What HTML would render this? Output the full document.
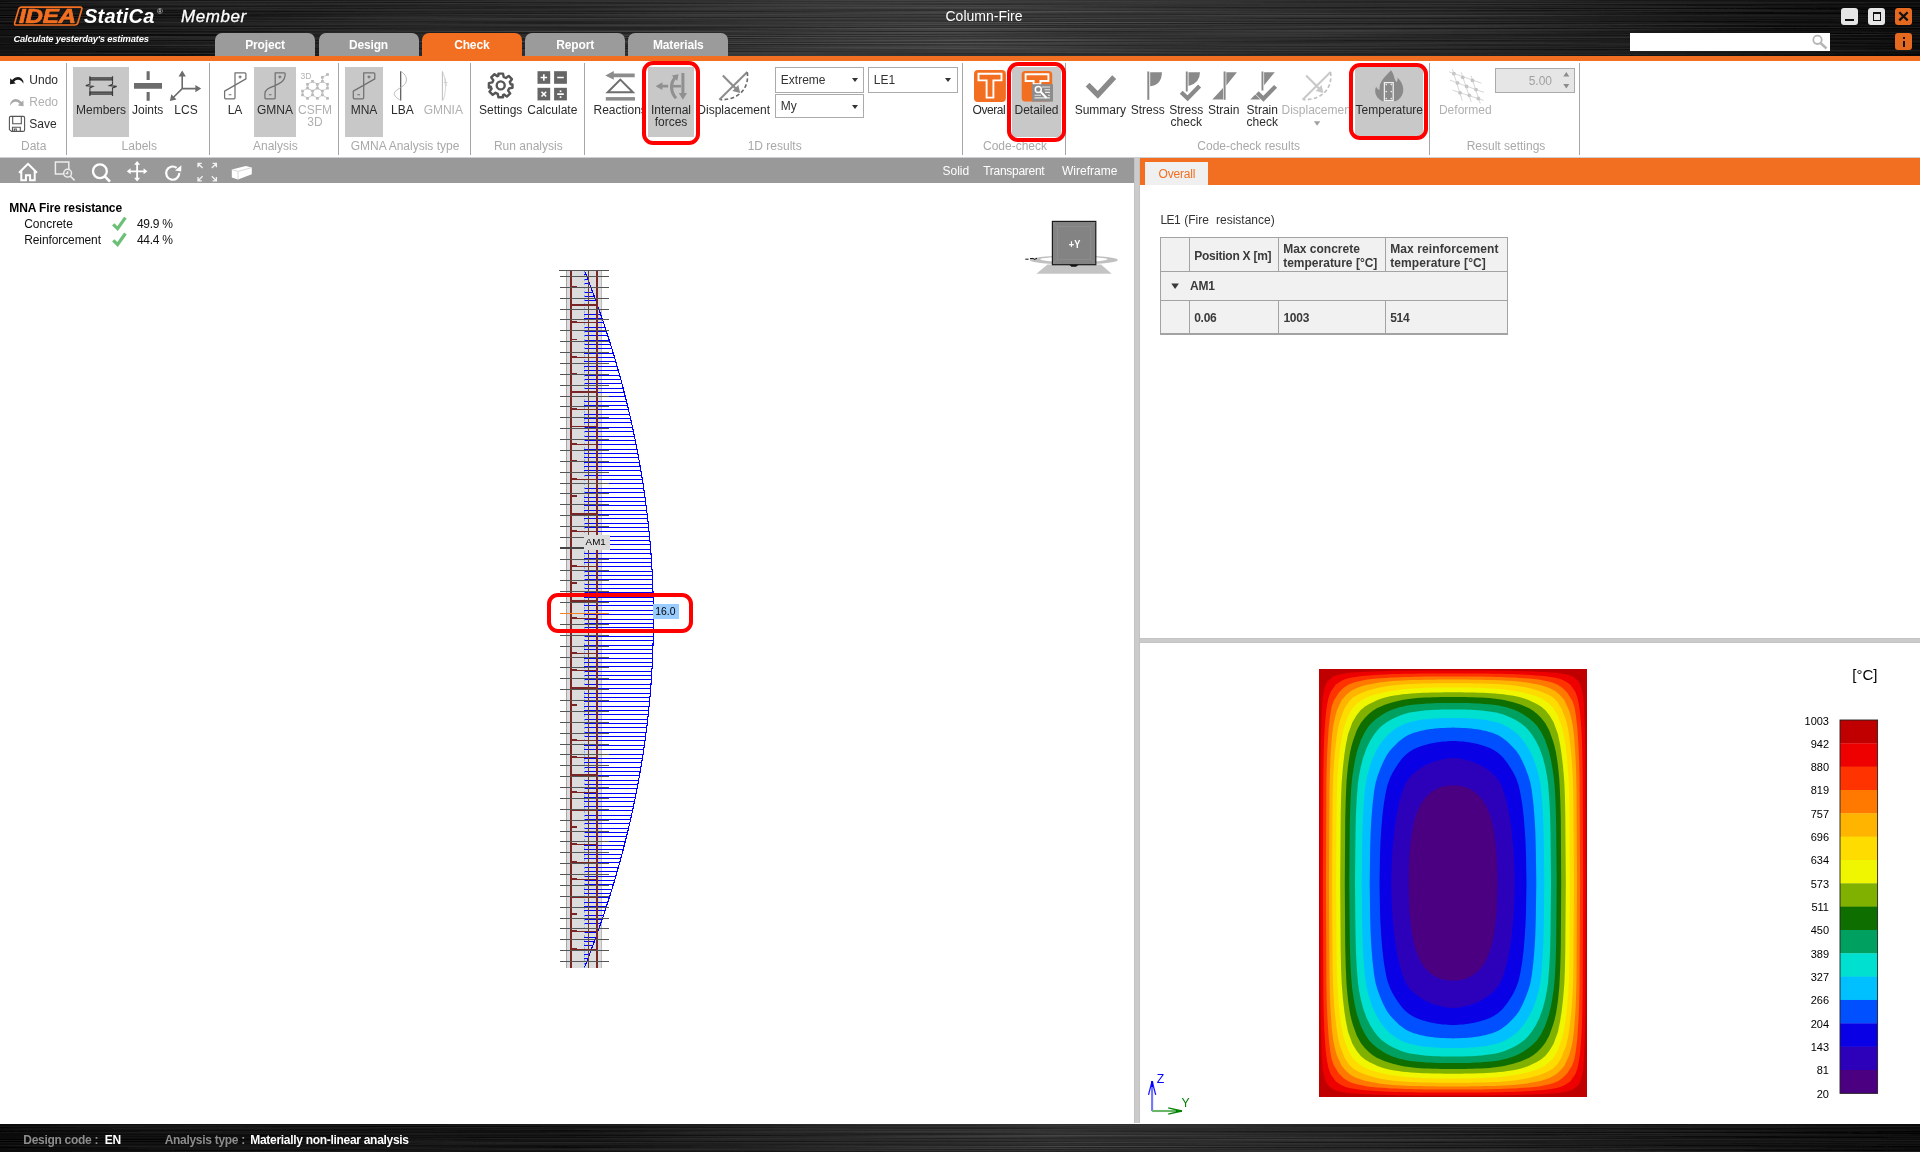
<!DOCTYPE html>
<html lang="en">
<head>
<meta charset="utf-8">
<title>Column-Fire</title>
<style>
*{box-sizing:border-box;margin:0;padding:0}
html,body{width:1920px;height:1152px;overflow:hidden;background:#fff}
body{font-family:"Liberation Sans",sans-serif;font-size:12px;color:#2b2b2b;position:relative}
.abs{position:absolute}
.t{position:absolute;white-space:pre;line-height:14px}
.c{text-align:center}
.brushed{position:absolute;left:0;width:1920px;background:#000;overflow:hidden}
.tab{position:absolute;top:33px;height:23px;width:100px;background:#9b9b9b;border-radius:7px 7px 0 0;color:#fff;font-weight:bold;font-size:12px;text-align:center;line-height:24px;letter-spacing:-0.15px}
.tab.on{background:#f26f21}
.sep{position:absolute;top:63px;width:1px;height:92px;background:#a6a6a6}
.glabel{position:absolute;top:139px;color:#a9a9a9;font-size:12px;text-align:center;white-space:pre;line-height:14px}
.hl{position:absolute;background:#c8c8c8;top:67px;height:70px}
.bl{position:absolute;top:104px;text-align:center;white-space:pre;line-height:12.4px;font-size:12px;color:#2b2b2b}
.dis{color:#b0b0b0}
.redbox{position:absolute;border:4px solid #fe0000;border-radius:11px}
.dd{position:absolute;height:25.4px;border:1px solid #ababab;background:#fff;font-size:12px;line-height:25px;padding-left:4.5px;color:#333}
.dd:after{content:"";position:absolute;right:5.6px;top:10px;border-left:3px solid transparent;border-right:3px solid transparent;border-top:4px solid #333}
svg{position:absolute;overflow:visible}
.th{font-weight:bold;color:#3a3a3a;letter-spacing:-0.25px}
.sb{font-weight:bold;letter-spacing:-0.3px}
</style>
</head>
<body>
<div id="app" style="position:absolute;left:0;top:0;width:1920px;height:1152px;will-change:transform">
<!-- ===== title bar ===== -->
<div class="brushed" style="top:0;height:56px">
<svg width="1920" height="56" style="left:0;top:0">
<defs>
<filter id="brush" x="0" y="0" width="100%" height="100%">
<feTurbulence type="fractalNoise" baseFrequency="0.0025 0.85" numOctaves="2" seed="7" result="n"/>
<feColorMatrix in="n" type="matrix" values="0 0 0 0 0  0 0 0 0 0  0 0 0 0 0  1.9 0 0 0 -0.55"/>
<feComposite operator="in" in="SourceGraphic"/>
</filter>
<linearGradient id="hg" x1="0" x2="1" y1="0" y2="0">
<stop offset="0" stop-color="#050505"/><stop offset="0.2" stop-color="#171717"/><stop offset="0.5" stop-color="#2b2b2b"/><stop offset="0.75" stop-color="#1a1a1a"/><stop offset="0.93" stop-color="#070707"/><stop offset="1" stop-color="#030303"/>
</linearGradient>
<linearGradient id="hs" x1="0" x2="1" y1="0" y2="0">
<stop offset="0" stop-color="#282828"/><stop offset="0.5" stop-color="#565656"/><stop offset="0.92" stop-color="#2a2a2a"/><stop offset="1" stop-color="#202020"/>
</linearGradient>
</defs>
<rect width="1920" height="56" fill="url(#hg)"/>
<rect width="1920" height="56" fill="url(#hs)" filter="url(#brush)"/>
</svg>
</div>
<!-- logo -->
<svg width="90" height="30" style="left:8px;top:2px"><path d="M13.5 5.2H72.2Q74.4 5.2 73.8 7.3L69.8 20.9Q69.2 23 67 23H8.3Q6.1 23 6.7 20.9L10.7 7.3Q11.3 5.2 13.5 5.2Z" fill="none" stroke="#f26f21" stroke-width="1.7"/></svg>
<div class="t" style="left:19.4px;top:5.8px;font-size:19.8px;line-height:20px;font-weight:bold;font-style:italic;color:#f26f21;letter-spacing:-0.2px;-webkit-text-stroke:0.7px #f26f21;transform:scaleX(1.22);transform-origin:0 0">IDEA</div>
<div class="t" style="left:84px;top:4.8px;font-size:20px;line-height:22px;font-weight:bold;font-style:italic;color:#fff;letter-spacing:0.25px">StatiCa</div>
<div class="t" style="left:157px;top:7.6px;font-size:8px;line-height:8px;color:#ddd">®</div>
<div class="t" style="left:181px;top:7px;font-size:17px;line-height:20px;font-style:italic;color:#fff;letter-spacing:0.55px;-webkit-text-stroke:0.3px #fff">Member</div>
<div class="t" style="left:13.5px;top:33px;font-size:9.4px;line-height:11px;font-style:italic;font-weight:bold;color:#fff;letter-spacing:-0.2px">Calculate yesterday's estimates</div>
<div class="t c" style="left:884px;top:8px;width:200px;font-size:14px;line-height:16px;color:#fff">Column-Fire</div>
<!-- tabs -->
<div class="tab" style="left:215px">Project</div>
<div class="tab" style="left:318.5px">Design</div>
<div class="tab on" style="left:421.8px">Check</div>
<div class="tab" style="left:525.2px">Report</div>
<div class="tab" style="left:628.3px">Materials</div>
<!-- window buttons -->
<div class="abs" style="left:1841px;top:8px;width:17px;height:16.5px;border-radius:3px;background:#e6e6e6"></div>
<div class="abs" style="left:1845px;top:19.2px;width:9px;height:1.7px;background:#111"></div>
<div class="abs" style="left:1868px;top:8px;width:17px;height:16.5px;border-radius:3px;background:#e6e6e6"></div>
<div class="abs" style="left:1872.5px;top:11.5px;width:8.5px;height:9px;border:1.5px solid #111;border-top-width:2.5px"></div>
<div class="abs" style="left:1895px;top:8px;width:17px;height:16.5px;border-radius:3px;background:#e5691f"></div>
<svg width="17" height="17" style="left:1895px;top:8px"><path d="M4.3 4.2L12.7 12.4M12.7 4.2L4.3 12.4" stroke="#111" stroke-width="2.2"/></svg>
<div class="abs" style="left:1630px;top:33px;width:200px;height:18px;background:#fff"></div>
<svg width="20" height="18" style="left:1810px;top:33px"><circle cx="7.5" cy="6.8" r="4.2" fill="none" stroke="#b5b5b5" stroke-width="1.8"/><path d="M10.5 10L16.5 15.5" stroke="#b5b5b5" stroke-width="2.4"/></svg>
<div class="abs" style="left:1895px;top:33px;width:17px;height:17px;border-radius:3px;background:#e5691f"></div>
<div class="abs" style="left:1902.5px;top:37px;width:2.2px;height:2px;background:#111"></div>
<div class="abs" style="left:1902.5px;top:40.6px;width:2.2px;height:6px;background:#111"></div>
<!-- orange stripe -->
<div class="abs" style="left:0;top:56px;width:1920px;height:5px;background:#f26f21"></div>
<!-- ===== ribbon ===== -->
<div class="abs" style="left:0;top:61px;width:1920px;height:96px;background:#fff"></div>
<div class="sep" style="left:66.3px"></div>
<div class="sep" style="left:209.3px"></div>
<div class="sep" style="left:338.0px"></div>
<div class="sep" style="left:470.1px"></div>
<div class="sep" style="left:584.3px"></div>
<div class="sep" style="left:962.3px"></div>
<div class="sep" style="left:1065.3px"></div>
<div class="sep" style="left:1429.3px"></div>
<div class="sep" style="left:1579.1px"></div>
<!-- highlights -->
<div class="hl" style="left:73px;width:56px"></div>
<div class="hl" style="left:254px;width:42px"></div>
<div class="hl" style="left:345.3px;width:37.6px"></div>
<div class="hl" style="left:648px;width:46px"></div>
<div class="hl" style="left:1012.3px;width:48.7px"></div>
<div class="hl" style="left:1355px;width:68.3px"></div>
<!-- data group -->
<div class="t" style="left:29.3px;top:73px">Undo</div>
<div class="t dis" style="left:29.3px;top:95px">Redo</div>
<div class="t" style="left:29.3px;top:117px">Save</div>
<div class="glabel" style="left:3.7px;width:60px">Data</div>
<!-- labels group -->
<div class="bl" style="left:61px;width:80px">Members</div>
<div class="bl" style="left:107.7px;width:80px">Joints</div>
<div class="bl" style="left:146px;width:80px">LCS</div>
<div class="glabel" style="left:99.3px;width:80px">Labels</div>
<!-- analysis -->
<div class="bl" style="left:195px;width:80px">LA</div>
<div class="bl" style="left:235px;width:80px">GMNA</div>
<div class="bl dis" style="left:275px;width:80px">CSFM
3D</div>
<div class="glabel" style="left:235.3px;width:80px">Analysis</div>
<div class="bl" style="left:324px;width:80px">MNA</div>
<div class="bl" style="left:362.3px;width:80px">LBA</div>
<div class="bl dis" style="left:403.3px;width:80px">GMNIA</div>
<div class="glabel" style="left:335px;width:140px">GMNA Analysis type</div>
<div class="bl" style="left:460.7px;width:80px">Settings</div>
<div class="bl" style="left:512.3px;width:80px">Calculate</div>
<div class="glabel" style="left:478.3px;width:100px">Run analysis</div>
<!-- 1D results -->
<div class="bl" style="left:593.5px;width:50px;overflow:hidden;text-align:left;height:14px">Reactions</div>
<div class="bl" style="left:631px;width:80px">Internal
forces</div>
<div class="bl" style="left:693.7px;width:80px">Displacement</div>
<div class="dd" style="left:775.3px;top:67.3px;width:89px">Extreme</div>
<div class="dd" style="left:775.3px;top:94px;width:89px;height:24.4px;line-height:23px">My</div>
<div class="dd" style="left:868.3px;top:67.3px;width:89.5px">LE1</div>
<div class="glabel" style="left:724.7px;width:100px">1D results</div>
<!-- code-check -->
<div class="bl" style="left:972.6px;width:32.9px;overflow:hidden;text-align:left;height:14px;letter-spacing:-0.45px">Overall</div>
<div class="bl" style="left:996.5px;width:80px">Detailed</div>
<div class="glabel" style="left:965px;width:100px">Code-check</div>
<div class="bl" style="left:1060.3px;width:80px">Summary</div>
<div class="bl" style="left:1107.7px;width:80px">Stress</div>
<div class="bl" style="left:1146.3px;width:80px">Stress
check</div>
<div class="bl" style="left:1183.7px;width:80px">Strain</div>
<div class="bl" style="left:1222.3px;width:80px">Strain
check</div>
<div class="bl dis" style="left:1281.5px;width:67px;overflow:hidden;text-align:left;height:14px">Displacement</div>
<div class="bl" style="left:1349.3px;width:80px">Temperature</div>
<div class="glabel" style="left:1188.7px;width:120px">Code-check results</div>
<div class="bl dis" style="left:1425.3px;width:80px">Deformed</div>
<div class="abs" style="left:1495px;top:67.5px;width:79.5px;height:25px;border:1px solid #ababab;background:#e6e6e6"></div>
<div class="t dis" style="left:1500px;top:73.8px;width:52px;text-align:right;color:#a0a0a0">5.00</div>
<div class="glabel" style="left:1446px;width:120px">Result settings</div>
<!-- red annotation boxes -->
<div class="redbox" style="left:642px;top:61.2px;width:58px;height:83.8px"></div>
<div class="redbox" style="left:1007px;top:62.2px;width:58.8px;height:79.5px"></div>
<div class="redbox" style="left:1349px;top:63px;width:79px;height:77px"></div>
<!-- ribbon icons -->
<svg width="1920" height="96" viewBox="0 61 1920 96" style="left:0;top:61px">
<!-- undo / redo / save -->
<path d="M10 84.2L10.2 78.2L12 79.9Q16.8 75.2 21.4 78.3Q23.8 80.4 23.4 83.8Q21.3 79.6 17.6 79.8Q15.6 80 14 81.7L15.8 83.4Z" fill="#1a1a1a"/>
<path d="M23.6 106.2L23.4 100.2L21.6 101.9Q16.8 97.2 12.2 100.3Q9.8 102.4 10.2 105.8Q12.3 101.6 16 101.8Q18 102 19.6 103.7L17.8 105.4Z" fill="#a9a9a9"/>
<path d="M10.8 116.4H23.2Q24.6 116.4 24.6 117.8V130Q24.6 131.4 23.2 131.4H11.5L9.4 129.6V117.8Q9.4 116.4 10.8 116.4Z" fill="none" stroke="#555" stroke-width="1.1"/>
<path d="M12.7 116.6V123.8H21.3V116.6M12.5 131.2V127.2H20.3V131.2M14.3 131V129H16.3V131" fill="none" stroke="#555" stroke-width="1.1"/>
<!-- members -->
<g stroke="#3a3a3a" fill="none">
<path d="M89.6 78.9H112.8M89.6 93.2H112.8" stroke-width="3.3"/><path d="M90.6 78.9H111.8M90.6 93.2H111.8" stroke-width="1" stroke="#777"/>
<path d="M89.9 76.2V81.6M112.5 76.2V81.6M89.9 90.5V95.9M112.5 90.5V95.9" stroke-width="1.2"/>
<path d="M89.9 81.6V84.2L85.8 85.6L93 86.4L89.9 87.9V90.5M112.5 81.6V84.2L109.4 85.6L116.6 86.4L112.5 87.9V90.5" stroke-width="1.1"/>
</g>
<!-- joints -->
<path d="M134 83.1H162V88.8H134ZM146.6 71.3H149.7V80H146.6ZM146.6 92.1H149.7V100.8H146.6Z" fill="#6c6c6c"/>
<!-- LCS -->
<g stroke="#6c6c6c" stroke-width="1.6" fill="none"><path d="M182.2 75V88.6H197M182.2 88.6L172.5 98.3"/></g>
<path d="M182.2 70.6L185.9 76.4H178.5ZM201.2 88.6L195.4 92.3V84.9ZM169.9 101L171.3 94.3L176.5 99.5Z" fill="#6c6c6c"/>
<!-- LA -->
<g fill="none" stroke="#707070" stroke-width="1.25" stroke-linejoin="round">
<path d="M235 72.8H244.9Q245.9 72.8 245.9 73.8V78.9L224.6 91.1V97.8Q224.6 98.8 225.6 98.8H234Q235 98.8 235 97.8Z"/>
<path d="M275.2 72.8H284.2Q285.2 72.8 285.2 73.8C285.2 88 266 84 264.9 93.5V97.8Q264.9 98.8 265.9 98.8H274.2Q275.2 98.8 275.2 97.8Z"/>
<path d="M363.7 72.8H373.8Q374.8 72.8 374.8 73.8V78.9L353.3 91.1V97.8Q353.3 98.8 354.3 98.8H362.7Q363.7 98.8 363.7 97.8Z"/>
</g>
<g stroke="#707070" stroke-width="1.1"><path d="M238.6 76.9H241.6M240.1 75.4V78.4M228.6 94.8H231.4M278.4 76.9H281.4M279.9 75.4V78.4M268.8 94.8H271.6M367.5 76.9H370.5M369 75.4V78.4M357.3 94.8H360.1"/></g>
<!-- CSFM 3D -->
<path d="M312.5 81.4L317.4 84.3L317.4 88.1L312.5 91.1L307.5 88.1L307.5 84.3ZM322.4 81.4L327.5 84.3L327.5 88.1L322.4 91.1L317.4 88.1L317.4 84.3ZM307.5 88.1L312.5 91.1L312.5 94.9L307.5 98.3L302.5 94.9L302.5 91.1ZM317.4 88.1L322.4 91.1L322.4 94.9L317.4 98.3L312.5 94.9L312.5 91.1ZM322.4 94.9L327.5 98.3M322.4 81.4L322.4 77.3L327.5 74.5" fill="none" stroke="#c6c6c6" stroke-width="0.9"/>
<g fill="#b9b9b9"><rect x="301.15" y="89.75" width="2.7" height="2.7"/><rect x="301.15" y="93.55" width="2.7" height="2.7"/><rect x="306.15" y="82.95" width="2.7" height="2.7"/><rect x="306.15" y="86.75" width="2.7" height="2.7"/><rect x="306.15" y="96.95" width="2.7" height="2.7"/><rect x="311.15" y="80.05" width="2.7" height="2.7"/><rect x="311.15" y="89.75" width="2.7" height="2.7"/><rect x="311.15" y="93.55" width="2.7" height="2.7"/><rect x="316.05" y="82.95" width="2.7" height="2.7"/><rect x="316.05" y="86.75" width="2.7" height="2.7"/><rect x="316.05" y="96.95" width="2.7" height="2.7"/><rect x="321.05" y="75.95" width="2.7" height="2.7"/><rect x="321.05" y="80.05" width="2.7" height="2.7"/><rect x="321.05" y="89.75" width="2.7" height="2.7"/><rect x="321.05" y="93.55" width="2.7" height="2.7"/><rect x="326.15" y="73.15" width="2.7" height="2.7"/><rect x="326.15" y="82.95" width="2.7" height="2.7"/><rect x="326.15" y="86.75" width="2.7" height="2.7"/><rect x="326.15" y="96.95" width="2.7" height="2.7"/></g>
<text x="300.6" y="79.2" font-family="Liberation Sans, sans-serif" font-size="8.6" fill="#b4b4b4">3D</text>
<!-- LBA / GMNIA -->
<path d="M400.7 71.2V100.6" stroke="#555" stroke-width="1.2" fill="none"/>
<path d="M400.7 71.5C406 74 408.5 80 404.5 84.5C401 88.5 394.5 90 394.3 93.5C394.2 97 398.5 99 400.7 100.4" stroke="#aaa" stroke-width="0.8" fill="none"/>
<path d="M442.4 71.3V100.5" stroke="#b4b4b4" stroke-width="0.9" fill="none"/>
<path d="M442.6 72C446.5 80 446 92 443.4 100M445 78L446.5 86M443.8 82.5H447.5" stroke="#c4c4c4" stroke-width="0.7" fill="none"/>
<!-- settings gear -->
<g transform="translate(500.7 85.4)" fill="none" stroke="#555" stroke-width="2.4" stroke-linejoin="round">
<path d="M-2.3 -11.8H2.3L3 -8.4L5.2 -7.4L8 -9.5L11.2 -6.2L9.1 -3.4L10 -1.2L11.8 -1L11.8 2.3L8.4 3L7.4 5.2L9.5 8L6.2 11.2L3.4 9.1L2.3 9.7V11.8H-2.3L-3 8.4L-5.2 7.4L-8 9.5L-11.2 6.2L-9.1 3.4L-10 1.2L-11.8 2.3V-2.3L-8.4 -3L-7.4 -5.2L-9.5 -8L-6.2 -11.2L-3.4 -9.1L-2.3 -9.7Z"/>
<circle r="4"/>
</g>
<!-- calculate -->
<g fill="#666"><rect x="537.5" y="71.2" width="12.7" height="12.6"/><rect x="554.1" y="71.2" width="12.8" height="12.6"/><rect x="537.5" y="87.8" width="12.7" height="12.6"/><rect x="554.1" y="87.8" width="12.8" height="12.6"/></g>
<g stroke="#fff" stroke-width="1.6" fill="none"><path d="M540.6 77.5H547.1M543.85 74.2V80.8M557.2 77.5H563.8M541.5 91.8L546.2 96.5M546.2 91.8L541.5 96.5M557.2 94.1H563.8"/></g>
<g fill="#fff"><rect x="559.7" y="90.4" width="1.7" height="1.7"/><rect x="559.7" y="96.2" width="1.7" height="1.7"/></g>
<!-- reactions -->
<g fill="#8c8c8c"><path d="M605.3 75.4L613.8 71.1V73.5H634.7V77.3H613.8V79.7Z"/><rect x="605.8" y="97.1" width="29.2" height="3.5"/></g>
<path d="M620.3 79.6L632.9 92.2H607.7Z" fill="none" stroke="#6e6e6e" stroke-width="2"/>
<!-- internal forces -->
<g fill="#909090"><path d="M655.6 86.2L662.4 82.3V84.8H668.2V87.6H662.4V90.1Z"/><path d="M682.9 99.7L678.8 93H681.4V73.1H684.4V93H687Z"/><rect x="672" y="84.9" width="9" height="2.6"/>
<path d="M678.6 74.2L677.2 81L675.6 79.3C671.8 84 672.6 92.6 677.2 97.3L675 99.3C669 93.4 668.2 83.2 673.4 77.3L671.8 75.5Z"/></g>
<!-- displacement (x2) -->
<g transform="translate(0 0)"><path d="M719.3 99.8L747.3 72" fill="none" stroke="#8c8c8c" stroke-width="2"/><path d="M722.8 75.5L736.5 89.2" fill="none" stroke="#8c8c8c" stroke-width="2.1"/><path d="M740.2 92.9L732.3 91L738.3 85Z" fill="#8c8c8c"/><path d="M747.3 72.3C749.2 86 741.5 99.6 720.5 99.8" fill="none" stroke="#6a6a6a" stroke-width="1.6" stroke-dasharray="3.8 2.3"/></g><g transform="translate(583.3 0)"><path d="M719.3 99.8L747.3 72" fill="none" stroke="#c8c8c8" stroke-width="2"/><path d="M722.8 75.5L736.5 89.2" fill="none" stroke="#c8c8c8" stroke-width="2.1"/><path d="M740.2 92.9L732.3 91L738.3 85Z" fill="#c8c8c8"/><path d="M747.3 72.3C749.2 86 741.5 99.6 720.5 99.8" fill="none" stroke="#c0c0c0" stroke-width="1.6" stroke-dasharray="3.8 2.3"/></g>
<!-- overall -->
<rect x="974" y="70" width="31.9" height="31.9" rx="4" fill="#f26f21"/>
<path d="M978.5 73.7H1001.5V80.4H993.4V97.6H986.6V80.4H978.5Z" fill="none" stroke="#fff" stroke-width="1.9"/>
<!-- detailed -->
<rect x="1021.7" y="71" width="30.5" height="30.5" rx="3.5" fill="#f26f21"/>
<path d="M1025.6 74.2H1048.4V81H1040.4V84.2H1033.6V81H1025.6Z" fill="none" stroke="#fff" stroke-width="1.9"/>
<rect x="1031.9" y="84.2" width="21.1" height="17.4" fill="#8c8c8c"/>
<path d="M1042 87H1050M1044.5 89.7H1050M1045 92.4H1050M1034.5 95.2H1041M1048 95.2H1050M1034.5 97.9H1050" stroke="#e8e8e8" stroke-width="1.1"/>
<circle cx="1038.3" cy="89.5" r="3" fill="none" stroke="#fff" stroke-width="1.5"/>
<path d="M1040.6 91.8L1046.6 98" stroke="#fff" stroke-width="2"/>
<!-- summary -->
<path d="M1087.6 84.6L1097.8 94.8L1114.2 77.2" fill="none" stroke="#8a8a8a" stroke-width="5.4"/>
<!-- stress -->
<g fill="#8a8a8a">
<rect x="1147.3" y="71.5" width="2" height="28.3"/><path d="M1150.2 72.3H1162Q1161.5 85.5 1150.2 86.2Z"/>
<rect x="1185.8" y="71.5" width="1.9" height="20"/><path d="M1188.5 72.3H1200Q1199.8 83.5 1188.5 86Z"/>
<rect x="1223.6" y="71.5" width="2" height="28.3"/><path d="M1226.3 72.2H1236.9L1226.3 85.4Z"/><path d="M1223 88V99.5H1212.3Z"/>
<rect x="1261.5" y="71.5" width="1.9" height="19"/><path d="M1264.1 72.2H1274.8L1264.1 85.2Z"/><path d="M1255.3 94.5L1260.3 99.5H1250.2Z"/>
</g>
<path d="M1181.2 92.3L1187.6 98.3L1199.6 86" fill="none" stroke="#8a8a8a" stroke-width="4.2"/>
<path d="M1257.2 92.8L1263.4 98.8L1275.6 86.4" fill="none" stroke="#8a8a8a" stroke-width="4.2"/>
<path d="M1313.9 121.3H1320.3L1317.1 125.8Z" fill="#a0a0a0"/>
<!-- temperature flame -->
<path d="M1391 70.2C1394.5 74.5 1394 79 1396.5 82.2C1397.8 80.5 1397.8 78.8 1397.5 77.6C1402 82 1404.2 87.5 1403 92.5C1402 97 1399 99.8 1395.5 101.2H1382.5C1378.5 99.5 1375.6 96 1375.2 91.5C1375 89.5 1375.6 87.8 1376.2 86.8C1377 88.6 1378.2 89.6 1379.6 89.8C1378.6 81.5 1385.5 76.5 1391 70.2Z" fill="#8a8a8a"/>
<rect x="1384.4" y="82.6" width="8.8" height="18" fill="#8a8a8a" stroke="#eee" stroke-width="1.3"/>
<g fill="#f0f0f0"><circle cx="1386.3" cy="84.6" r="0.8"/><circle cx="1391.3" cy="84.6" r="0.8"/><circle cx="1386.3" cy="91.6" r="0.8"/><circle cx="1391.3" cy="91.6" r="0.8"/><circle cx="1386.3" cy="98.6" r="0.8"/><circle cx="1391.3" cy="98.6" r="0.8"/></g>
<!-- deformed -->
<g stroke="#d2d2d2" stroke-width="0.9" fill="none"><path d="M1449 71.8L1481.5 83.2M1450 80.2L1484 92.4M1452.5 90.2L1483.5 100.4M1452.3 69.2L1462.3 100.5M1461.2 72.3L1471.2 101.8M1471 75.8L1480.3 103.5"/></g>
<g fill="#c6c6c6"><circle cx="1453.9" cy="73.7" r="1.9"/><circle cx="1462.7" cy="77.3" r="1.9"/><circle cx="1472.5" cy="80.4" r="1.9"/><circle cx="1457.4" cy="82.9" r="1.9"/><circle cx="1466.6" cy="86.5" r="1.9"/><circle cx="1476" cy="89.6" r="1.9"/><circle cx="1460" cy="92.8" r="1.9"/><circle cx="1469.3" cy="95.3" r="1.9"/><circle cx="1478.3" cy="98.5" r="1.9"/></g>
<!-- spinner arrows -->
<path d="M1563.3 76.6L1566.3 72L1569.3 76.6ZM1563.3 84L1566.3 88.6L1569.3 84Z" fill="#8c8c8c"/>

</svg>
<!-- ===== left viewport ===== -->
<div class="abs" style="left:0;top:157px;width:1920px;height:1px;background:#cdcfd2"></div>
<div class="abs" style="left:0;top:158px;width:1134px;height:25px;background:#999"></div>
<svg width="260" height="26" viewBox="0 157 260 26" style="left:0;top:157px">
<g fill="none" stroke="#fff" stroke-width="2">
<path d="M19 172.8L28 163.8L37 172.8M21.3 171V180.2H25.9V175.2H30.1V180.2H34.7V171"/>
<circle cx="99.9" cy="171.2" r="6.9" stroke-width="2.3"/><path d="M104.8 176.3L110 181.6" stroke-width="2.6"/>
<path d="M137.1 163V179.6M128.8 171.3H145.4" stroke-width="1.8"/>
<path d="M179.3 172.9A6.6 6.6 0 1 1 176.6 167.8" stroke-width="2.2"/>
</g>
<g fill="none" stroke="#ececec" stroke-width="1.5"><rect x="55.4" y="162" width="13.4" height="12"/><circle cx="67.6" cy="173.2" r="3.9" fill="#999"/><path d="M67.6 171.2V173.4H65.6M70.4 176.2L74.6 180.4" /></g>
<g fill="#fff"><path d="M137.1 161L140.1 164.8H134.1ZM137.1 181.6L140.1 177.8H134.1ZM126.8 171.3L130.6 168.3V174.3ZM147.4 171.3L143.6 168.3V174.3Z"/><path d="M181.4 165.2L181.2 171.6L175 170.4Z"/></g>
<g fill="none" stroke="#f2f2f2" stroke-width="1.3"><path d="M198 167.2V163.4H201.8M198.3 163.7L202.6 168M216.4 167.2V163.4H212.6M216.1 163.7L211.8 168M198 177V180.8H201.8M198.3 180.5L202.6 176.2M216.4 177V180.8H212.6M216.1 180.5L211.8 176.2"/></g>
<path d="M231.8 169.6L245.8 166L251.8 167.6V174.2L238 179.6L231.8 177.4Z" fill="#fff"/><path d="M231.8 169.6L238 171.4V179.6M238 171.4L251.8 167.6" fill="none" stroke="#ccc" stroke-width="0.8"/>
</svg>
<div class="t" style="left:942.5px;top:164px;color:#fff">Solid</div>
<div class="t" style="left:983.2px;top:164px;color:#fff;letter-spacing:-0.28px">Transparent</div>
<div class="t" style="left:1062px;top:164px;color:#fff">Wireframe</div>
<div class="t" style="left:9.3px;top:200.8px;font-weight:bold;color:#000;letter-spacing:-0.12px">MNA Fire resistance</div>
<div class="t" style="left:24.2px;top:216.6px;color:#111">Concrete</div>
<div class="t" style="left:24.2px;top:232.6px;color:#111;letter-spacing:-0.1px">Reinforcement</div>
<div class="t" style="left:137px;top:216.6px;color:#111;letter-spacing:-0.3px">49.9 %</div>
<div class="t" style="left:137px;top:232.6px;color:#111;letter-spacing:-0.3px">44.4 %</div>
<svg width="20" height="34" viewBox="110 215 20 34" style="left:110px;top:215px"><path d="M113.2 224.4L117.6 228.6L125.4 217.6M113.2 240.3L117.6 244.5L125.4 233.5" fill="none" stroke="#6cbf76" stroke-width="3.2"/></svg>
<!-- column -->
<svg width="200" height="740" viewBox="540 250 200 740" style="left:540px;top:250px" shape-rendering="crispEdges">
<rect x="566" y="270.5" width="36" height="697.0" fill="#dcdcdc"/><path d="M566.5 270.5V967.5" stroke="#a6a6a6" stroke-width="1"/><path d="M601.5 270.5V967.5" stroke="#bdbdbd" stroke-width="1"/>
<path d="M584.4 274.86H586.11M584.4 279.21H587.81M584.4 283.57H589.48M584.4 287.93H591.13M584.4 292.28H592.76M584.4 296.64H594.36M584.4 300.99H595.95M584.4 305.35H597.51M584.4 309.71H599.05M584.4 314.06H600.57M584.4 318.42H602.07M584.4 322.77H603.55M584.4 327.13H605.00M584.4 331.49H606.44M584.4 335.84H607.85M584.4 340.20H609.24M584.4 344.56H610.61M584.4 348.91H611.96M584.4 353.27H613.28M584.4 357.62H614.59M584.4 361.98H615.87M584.4 366.34H617.13M584.4 370.69H618.37M584.4 375.05H619.59M584.4 379.41H620.79M584.4 383.76H621.96M584.4 388.12H623.12M584.4 392.48H624.25M584.4 396.83H625.36M584.4 401.19H626.45M584.4 405.54H627.51M584.4 409.90H628.56M584.4 414.26H629.58M584.4 418.61H630.59M584.4 422.97H631.57M584.4 427.32H632.53M584.4 431.68H633.47M584.4 436.04H634.38M584.4 440.39H635.28M584.4 444.75H636.15M584.4 449.11H637.00M584.4 453.46H637.83M584.4 457.82H638.64M584.4 462.18H639.43M584.4 466.53H640.19M584.4 470.89H640.94M584.4 475.24H641.66M584.4 479.60H642.36M584.4 483.96H643.04M584.4 488.31H643.70M584.4 492.67H644.33M584.4 497.02H644.95M584.4 501.38H645.54M584.4 505.74H646.11M584.4 510.09H646.66M584.4 514.45H647.19M584.4 518.81H647.70M584.4 523.16H648.18M584.4 527.52H648.65M584.4 531.88H649.09M584.4 536.23H649.51M584.4 540.59H649.91M584.4 544.94H650.28M584.4 549.30H650.64M584.4 553.66H650.97M584.4 558.01H651.29M584.4 562.37H651.58M584.4 566.73H651.85M584.4 571.08H652.10M584.4 575.44H652.32M584.4 579.79H652.53M584.4 584.15H652.71M584.4 588.51H652.87M584.4 592.86H653.01M584.4 597.22H653.13M584.4 601.58H653.23M584.4 605.93H653.30M584.4 610.29H653.36M584.4 614.64H653.39M584.4 619.00H653.40M584.4 623.36H653.39M584.4 627.71H653.36M584.4 632.07H653.30M584.4 636.42H653.23M584.4 640.78H653.13M584.4 645.14H653.01M584.4 649.49H652.87M584.4 653.85H652.71M584.4 658.21H652.53M584.4 662.56H652.32M584.4 666.92H652.10M584.4 671.27H651.85M584.4 675.63H651.58M584.4 679.99H651.29M584.4 684.34H650.97M584.4 688.70H650.64M584.4 693.06H650.28M584.4 697.41H649.91M584.4 701.77H649.51M584.4 706.12H649.09M584.4 710.48H648.65M584.4 714.84H648.18M584.4 719.19H647.70M584.4 723.55H647.19M584.4 727.91H646.66M584.4 732.26H646.11M584.4 736.62H645.54M584.4 740.98H644.95M584.4 745.33H644.33M584.4 749.69H643.70M584.4 754.04H643.04M584.4 758.40H642.36M584.4 762.76H641.66M584.4 767.11H640.94M584.4 771.47H640.19M584.4 775.83H639.43M584.4 780.18H638.64M584.4 784.54H637.83M584.4 788.89H637.00M584.4 793.25H636.15M584.4 797.61H635.28M584.4 801.96H634.38M584.4 806.32H633.47M584.4 810.67H632.53M584.4 815.03H631.57M584.4 819.39H630.59M584.4 823.74H629.58M584.4 828.10H628.56M584.4 832.46H627.51M584.4 836.81H626.45M584.4 841.17H625.36M584.4 845.52H624.25M584.4 849.88H623.12M584.4 854.24H621.96M584.4 858.59H620.79M584.4 862.95H619.59M584.4 867.31H618.37M584.4 871.66H617.13M584.4 876.02H615.87M584.4 880.38H614.59M584.4 884.73H613.28M584.4 889.09H611.96M584.4 893.44H610.61M584.4 897.80H609.24M584.4 902.16H607.85M584.4 906.51H606.44M584.4 910.87H605.00M584.4 915.23H603.55M584.4 919.58H602.07M584.4 923.94H600.57M584.4 928.29H599.05M584.4 932.65H597.51M584.4 937.01H595.95M584.4 941.36H594.36M584.4 945.72H592.76M584.4 950.08H591.13M584.4 954.43H589.48M584.4 958.79H587.81M584.4 963.14H586.11" stroke="#0000ff" stroke-width="1" fill="none"/>
<path d="M584.40 270.50 L586.11 274.86 L587.81 279.21 L589.48 283.57 L591.13 287.93 L592.76 292.28 L594.36 296.64 L595.95 300.99 L597.51 305.35 L599.05 309.71 L600.57 314.06 L602.07 318.42 L603.55 322.77 L605.00 327.13 L606.44 331.49 L607.85 335.84 L609.24 340.20 L610.61 344.56 L611.96 348.91 L613.28 353.27 L614.59 357.62 L615.87 361.98 L617.13 366.34 L618.37 370.69 L619.59 375.05 L620.79 379.41 L621.96 383.76 L623.12 388.12 L624.25 392.48 L625.36 396.83 L626.45 401.19 L627.51 405.54 L628.56 409.90 L629.58 414.26 L630.59 418.61 L631.57 422.97 L632.53 427.32 L633.47 431.68 L634.38 436.04 L635.28 440.39 L636.15 444.75 L637.00 449.11 L637.83 453.46 L638.64 457.82 L639.43 462.18 L640.19 466.53 L640.94 470.89 L641.66 475.24 L642.36 479.60 L643.04 483.96 L643.70 488.31 L644.33 492.67 L644.95 497.02 L645.54 501.38 L646.11 505.74 L646.66 510.09 L647.19 514.45 L647.70 518.81 L648.18 523.16 L648.65 527.52 L649.09 531.88 L649.51 536.23 L649.91 540.59 L650.28 544.94 L650.64 549.30 L650.97 553.66 L651.29 558.01 L651.58 562.37 L651.85 566.73 L652.10 571.08 L652.32 575.44 L652.53 579.79 L652.71 584.15 L652.87 588.51 L653.01 592.86 L653.13 597.22 L653.23 601.58 L653.30 605.93 L653.36 610.29 L653.39 614.64 L653.40 619.00 L653.39 623.36 L653.36 627.71 L653.30 632.07 L653.23 636.42 L653.13 640.78 L653.01 645.14 L652.87 649.49 L652.71 653.85 L652.53 658.21 L652.32 662.56 L652.10 666.92 L651.85 671.27 L651.58 675.63 L651.29 679.99 L650.97 684.34 L650.64 688.70 L650.28 693.06 L649.91 697.41 L649.51 701.77 L649.09 706.12 L648.65 710.48 L648.18 714.84 L647.70 719.19 L647.19 723.55 L646.66 727.91 L646.11 732.26 L645.54 736.62 L644.95 740.98 L644.33 745.33 L643.70 749.69 L643.04 754.04 L642.36 758.40 L641.66 762.76 L640.94 767.11 L640.19 771.47 L639.43 775.83 L638.64 780.18 L637.83 784.54 L637.00 788.89 L636.15 793.25 L635.28 797.61 L634.38 801.96 L633.47 806.32 L632.53 810.67 L631.57 815.03 L630.59 819.39 L629.58 823.74 L628.56 828.10 L627.51 832.46 L626.45 836.81 L625.36 841.17 L624.25 845.52 L623.12 849.88 L621.96 854.24 L620.79 858.59 L619.59 862.95 L618.37 867.31 L617.13 871.66 L615.87 876.02 L614.59 880.38 L613.28 884.73 L611.96 889.09 L610.61 893.44 L609.24 897.80 L607.85 902.16 L606.44 906.51 L605.00 910.87 L603.55 915.23 L602.07 919.58 L600.57 923.94 L599.05 928.29 L597.51 932.65 L595.95 937.01 L594.36 941.36 L592.76 945.72 L591.13 950.08 L589.48 954.43 L587.81 958.79 L586.11 963.14 L584.40 967.50" stroke="#0000ff" stroke-width="1.1" fill="none"/>
<path d="M584.4 270.5V967.5" stroke="#6aa0ff" stroke-width="0.8" stroke-dasharray="2 2" fill="none"/>
<path d="M570 287.60H598M570 305.01H598M570 322.42H598M570 339.83h7M570 357.24H598M570 374.65H598M570 392.06H598M570 409.47H598M570 426.88H598M570 444.29H598M570 461.70h7M570 479.11H598M570 496.52h7M570 513.93H598M570 531.34H598M570 548.75H598M570 566.16H598M570 583.57h7M570 600.98H598M570 618.39H598M570 635.80H598M570 653.21H598M570 670.62H598M570 688.03H598M570 705.44h7M570 722.85H598M570 740.26H598M570 757.67H598M570 775.08H598M570 792.49H598M570 809.90H598M570 827.31h7M570 844.72H598M570 862.13H598M570 879.54H598M570 896.95H598M570 914.36h7M570 931.77H598M570 949.18H598" stroke="#7a2626" stroke-width="1.2" fill="none"/>
<path d="M570 287.00h7M570 304.41h7M570 321.82h7M570 339.23h7M570 356.64h7M570 374.05h7M570 391.46h7M570 408.87h7M570 426.28h7M570 443.69h7M570 461.10h7M570 478.51h7M570 495.92h7M570 513.33h7M570 530.74h7M570 548.15h7M570 565.56h7M570 582.97h7M570 600.38h7M570 617.79h7M570 635.20h7M570 652.61h7M570 670.02h7M570 687.43h7M570 704.84h7M570 722.25h7M570 739.66h7M570 757.07h7M570 774.48h7M570 791.89h7M570 809.30h7M570 826.71h7M570 844.12h7M570 861.53h7M570 878.94h7M570 896.35h7M570 913.76h7M570 931.17h7M570 948.58h7" stroke="#7a2626" stroke-width="1.4" fill="none"/>
<path d="M571 270.5V967.5M597 270.5V967.5" stroke="#7a2626" stroke-width="1.8" fill="none"/>
<path d="M588.5 270.5V967.5" stroke="#6b3a30" stroke-width="1" fill="none"/>
<path d="M559 270.5H609M559.5 276.40H609M559.5 287.27H609M559.5 298.15H609M559.5 309.02H609M559.5 319.90H609M559.5 330.77H609M559.5 341.65H609M559.5 352.52H609M559.5 363.40H609M559.5 374.27H609M559.5 385.15H609M559.5 396.02H609M559.5 406.90H609M559.5 417.77H609M559.5 428.65H609M559.5 439.52H609M559.5 450.40H609M559.5 461.27H609M559.5 472.15H609M559.5 483.02H609M559.5 493.90H609M559.5 504.77H609M559.5 515.65H609M559.5 526.52H609M559.5 537.40H609M559.5 559.15H609M559.5 570.02H609M559.5 580.90H609M559.5 591.77H609M559.5 602.65H609M559.5 624.40H609M559.5 635.27H609M559.5 646.15H609M559.5 657.02H609M559.5 667.90H609M559.5 678.77H609M559.5 689.65H609M559.5 700.52H609M559.5 711.40H609M559.5 722.27H609M559.5 733.15H609M559.5 744.02H609M559.5 754.90H609M559.5 765.77H609M559.5 776.65H609M559.5 787.52H609M559.5 798.40H609M559.5 809.27H609M559.5 820.15H609M559.5 831.02H609M559.5 841.90H609M559.5 852.77H609M559.5 863.65H609M559.5 874.52H609M559.5 885.40H609M559.5 896.27H609M559.5 907.15H609M559.5 918.02H609M559.5 928.90H609M559.5 939.77H609M559.5 950.65H609M559.5 961.52H609" stroke="#555" stroke-width="1" fill="none"/>
<path d="M559.5 613.5H609" stroke="#f5821f" stroke-width="1"/>
<path d="M560 548.3H584.3" stroke="#444" stroke-width="2"/>
</svg>
<div class="abs" style="left:584.3px;top:535px;width:25.4px;height:15px;background:#dcdcdc"></div>
<div class="t" style="left:585.6px;top:536.2px;font-size:9.8px;line-height:12px;color:#000">AM1</div>
<div class="abs" style="left:653.3px;top:604.2px;width:25.6px;height:14.5px;background:#99ccff"></div>
<div class="t" style="left:655.3px;top:606.2px;font-size:10.4px;line-height:12px;color:#000">16.0</div>
<div class="redbox" style="left:547px;top:593px;width:146px;height:40px;border-width:4px"></div>
<!-- nav cube -->
<svg width="110" height="70" viewBox="1015 215 110 70" style="left:1015px;top:215px">
<path d="M1047.5 264.4H1101L1111.7 273.8H1036.4Z" fill="#c4c4c4"/>
<path d="M1029.7 259.9A44.1 4.6 0 1 0 1117.9 259.9A44.1 4.6 0 1 0 1029.7 259.9ZM1040.1 259.3A33.7 2.7 0 1 1 1107.5 259.3A33.7 2.7 0 1 1 1040.1 259.3Z" fill="#c0c0c0" fill-rule="evenodd"/>
<path d="M1025.3 259.2H1028.6M1030 258.6L1033 258.4L1034.5 259.4L1037 258.4" stroke="#111" stroke-width="1" fill="none"/>
<path d="M1069 264.5H1079L1076 266.8H1071.5Z" fill="#111"/>
<rect x="1052.4" y="221.4" width="43.4" height="43.3" fill="#838383" stroke="#1a1a1a" stroke-width="1.2"/>
<path d="M1057.5 226.6H1090.7V259.4H1057.5ZM1053 222L1057.5 226.6M1095.2 222L1090.7 226.6M1053 264L1057.5 259.4M1095.2 264L1090.7 259.4" fill="none" stroke="#8f8f8f" stroke-width="0.8"/>
<text x="1068.8" y="248" font-family="Liberation Sans, sans-serif" font-weight="bold" font-size="10.5" fill="#fff" textLength="11.5" lengthAdjust="spacingAndGlyphs">+Y</text>
</svg>
<!-- vertical splitter -->
<div class="abs" style="left:1134px;top:158px;width:6px;height:965px;background:#cbcbcb;border-left:1px solid #c2c2c2;border-right:1px solid #c2c2c2"></div>
<!-- ===== right panel ===== -->
<div class="abs" style="left:1140px;top:158px;width:780px;height:27px;background:#f26f21"></div>
<div class="abs" style="left:1145px;top:162.2px;width:63px;height:22.8px;background:#f0f0f0"></div>
<div class="t" style="left:1158.5px;top:166.8px;color:#f26f21;letter-spacing:-0.2px">Overall</div>
<div class="t" style="left:1160.5px;top:212.8px;color:#333"><span style="letter-spacing:-0.6px">LE1</span><span style="word-spacing:0.9px"> </span>(Fire<span style="word-spacing:3.7px"> </span>resistance)</div>
<!-- table -->
<div class="abs" style="left:1160px;top:237px;width:347.5px;height:97.6px;background:#f1f1f1;border:1.3px solid #a3a3a3;border-bottom:2px solid #a3a3a3;border-right:1.8px solid #a3a3a3"></div>
<div class="abs" style="left:1160px;top:271px;width:347px;height:1.2px;background:#a3a3a3"></div>
<div class="abs" style="left:1160px;top:299.6px;width:347px;height:1.2px;background:#a3a3a3"></div>
<div class="abs" style="left:1188.7px;top:237px;width:1.2px;height:34px;background:#a3a3a3"></div>
<div class="abs" style="left:1277.8px;top:237px;width:1.2px;height:34px;background:#a3a3a3"></div>
<div class="abs" style="left:1384.8px;top:237px;width:1.2px;height:34px;background:#a3a3a3"></div>
<div class="abs" style="left:1188.7px;top:300px;width:1.2px;height:34px;background:#a3a3a3"></div>
<div class="abs" style="left:1277.8px;top:300px;width:1.2px;height:34px;background:#a3a3a3"></div>
<div class="abs" style="left:1384.8px;top:300px;width:1.2px;height:34px;background:#a3a3a3"></div>
<div class="t th" style="left:1194.2px;top:249.4px">Position X [m]</div>
<div class="t th" style="left:1283.2px;top:241.6px;letter-spacing:0">Max concrete
temperature [°C]</div>
<div class="t th" style="left:1390.2px;top:241.6px;letter-spacing:0.1px">Max reinforcement
temperature [°C]</div>
<svg width="10" height="8" style="left:1171px;top:282.8px"><path d="M0.3 0.4H7.9L4.1 6Z" fill="#3a3a3a"/></svg>
<div class="t th" style="left:1190px;top:278.9px">AM1</div>
<div class="t th" style="left:1194.2px;top:310.7px">0.06</div>
<div class="t th" style="left:1283.4px;top:310.7px">1003</div>
<div class="t th" style="left:1390.2px;top:310.7px">514</div>
<!-- horizontal splitter -->
<div class="abs" style="left:1140px;top:638px;width:780px;height:5px;background:#cbcbcb;border-top:1px solid #c4c4c4;border-bottom:1px solid #c4c4c4"></div>
<!-- contour plot -->
<svg width="780" height="482" viewBox="1140 641 780 482" style="left:1140px;top:641px">
<g shape-rendering="auto">
<rect x="1319.0" y="669.0" width="268.0" height="428.0" fill="#c00000"/>
<path d="M1320.2 883.0 L1320.7 754.1 L1321.2 728.7 L1321.7 714.3 L1322.1 705.2 L1322.6 699.2 L1323.1 695.5 L1323.5 693.0 L1324.0 690.7 L1324.5 688.7 L1325.0 687.1 L1325.4 685.8 L1325.9 684.5 L1326.4 683.5 L1326.8 682.6 L1327.3 681.8 L1327.8 681.1 L1328.2 680.4 L1333.2 676.5 L1338.2 674.8 L1343.2 673.7 L1348.2 673.0 L1353.2 672.5 L1358.2 672.2 L1363.2 671.9 L1368.2 671.7 L1373.2 671.5 L1378.2 671.3 L1383.1 671.2 L1388.1 671.0 L1393.1 670.9 L1398.1 670.8 L1403.1 670.8 L1408.1 670.7 L1413.1 670.6 L1418.1 670.6 L1423.1 670.6 L1428.0 670.5 L1433.0 670.5 L1438.0 670.5 L1443.0 670.5 L1448.0 670.5 L1453.0 670.5 L1453.0 670.5 L1458.0 670.5 L1463.0 670.5 L1468.0 670.5 L1473.0 670.5 L1478.0 670.5 L1482.9 670.6 L1487.9 670.6 L1492.9 670.6 L1497.9 670.7 L1502.9 670.8 L1507.9 670.8 L1512.9 670.9 L1517.9 671.0 L1522.9 671.2 L1527.8 671.3 L1532.8 671.5 L1537.8 671.7 L1542.8 671.9 L1547.8 672.2 L1552.8 672.5 L1557.8 673.0 L1562.8 673.7 L1567.8 674.8 L1572.8 676.5 L1577.8 680.4 L1578.2 681.1 L1578.7 681.8 L1579.2 682.6 L1579.6 683.5 L1580.1 684.5 L1580.6 685.8 L1581.0 687.1 L1581.5 688.7 L1582.0 690.7 L1582.5 693.0 L1582.9 695.5 L1583.4 699.2 L1583.9 705.2 L1584.3 714.3 L1584.8 728.7 L1585.3 754.1 L1585.8 883.0 L1585.8 883.0 L1585.3 1011.9 L1584.8 1037.3 L1584.3 1051.7 L1583.9 1060.8 L1583.4 1066.8 L1582.9 1070.5 L1582.5 1073.0 L1582.0 1075.3 L1581.5 1077.3 L1581.0 1078.9 L1580.6 1080.2 L1580.1 1081.5 L1579.6 1082.5 L1579.2 1083.4 L1578.7 1084.2 L1578.2 1084.9 L1577.8 1085.6 L1572.8 1089.5 L1567.8 1091.2 L1562.8 1092.3 L1557.8 1093.0 L1552.8 1093.5 L1547.8 1093.8 L1542.8 1094.1 L1537.8 1094.3 L1532.8 1094.5 L1527.8 1094.7 L1522.9 1094.8 L1517.9 1095.0 L1512.9 1095.1 L1507.9 1095.2 L1502.9 1095.2 L1497.9 1095.3 L1492.9 1095.4 L1487.9 1095.4 L1482.9 1095.4 L1478.0 1095.5 L1473.0 1095.5 L1468.0 1095.5 L1463.0 1095.5 L1458.0 1095.5 L1453.0 1095.5 L1453.0 1095.5 L1448.0 1095.5 L1443.0 1095.5 L1438.0 1095.5 L1433.0 1095.5 L1428.0 1095.5 L1423.1 1095.4 L1418.1 1095.4 L1413.1 1095.4 L1408.1 1095.3 L1403.1 1095.2 L1398.1 1095.2 L1393.1 1095.1 L1388.1 1095.0 L1383.1 1094.8 L1378.2 1094.7 L1373.2 1094.5 L1368.2 1094.3 L1363.2 1094.1 L1358.2 1093.8 L1353.2 1093.5 L1348.2 1093.0 L1343.2 1092.3 L1338.2 1091.2 L1333.2 1089.5 L1328.2 1085.6 L1327.8 1084.9 L1327.3 1084.2 L1326.8 1083.4 L1326.4 1082.5 L1325.9 1081.5 L1325.4 1080.2 L1325.0 1078.9 L1324.5 1077.3 L1324.0 1075.3 L1323.5 1073.0 L1323.1 1070.5 L1322.6 1066.8 L1322.1 1060.8 L1321.7 1051.7 L1321.2 1037.3 L1320.7 1011.9 L1320.2 883.0Z" fill="#ee0000"/>
<path d="M1322.9 883.0 L1323.4 769.2 L1323.8 748.8 L1324.3 736.2 L1324.8 727.1 L1325.3 720.8 L1325.7 715.5 L1326.2 711.1 L1326.7 707.5 L1327.1 704.7 L1327.6 702.2 L1328.1 700.0 L1328.5 698.0 L1329.0 696.4 L1329.5 695.0 L1330.0 693.8 L1330.4 692.6 L1330.9 691.5 L1335.8 684.6 L1340.7 681.2 L1345.6 679.1 L1350.4 677.8 L1355.3 676.9 L1360.2 676.3 L1365.1 675.8 L1370.0 675.4 L1374.9 675.0 L1379.7 674.7 L1384.6 674.5 L1389.5 674.3 L1394.4 674.1 L1399.3 674.0 L1404.2 673.8 L1409.0 673.8 L1413.9 673.7 L1418.8 673.6 L1423.7 673.6 L1428.6 673.6 L1433.5 673.5 L1438.3 673.5 L1443.2 673.5 L1448.1 673.5 L1453.0 673.5 L1453.0 673.5 L1457.9 673.5 L1462.8 673.5 L1467.7 673.5 L1472.5 673.5 L1477.4 673.6 L1482.3 673.6 L1487.2 673.6 L1492.1 673.7 L1497.0 673.8 L1501.8 673.8 L1506.7 674.0 L1511.6 674.1 L1516.5 674.3 L1521.4 674.5 L1526.3 674.7 L1531.1 675.0 L1536.0 675.4 L1540.9 675.8 L1545.8 676.3 L1550.7 676.9 L1555.6 677.8 L1560.4 679.1 L1565.3 681.2 L1570.2 684.6 L1575.1 691.5 L1575.6 692.6 L1576.0 693.8 L1576.5 695.0 L1577.0 696.4 L1577.5 698.0 L1577.9 700.0 L1578.4 702.2 L1578.9 704.7 L1579.3 707.5 L1579.8 711.1 L1580.3 715.5 L1580.7 720.8 L1581.2 727.1 L1581.7 736.2 L1582.2 748.8 L1582.6 769.2 L1583.1 883.0 L1583.1 883.0 L1582.6 996.8 L1582.2 1017.2 L1581.7 1029.8 L1581.2 1038.9 L1580.7 1045.2 L1580.3 1050.5 L1579.8 1054.9 L1579.3 1058.5 L1578.9 1061.3 L1578.4 1063.8 L1577.9 1066.0 L1577.5 1068.0 L1577.0 1069.6 L1576.5 1071.0 L1576.0 1072.2 L1575.6 1073.4 L1575.1 1074.5 L1570.2 1081.4 L1565.3 1084.8 L1560.4 1086.9 L1555.6 1088.2 L1550.7 1089.1 L1545.8 1089.7 L1540.9 1090.2 L1536.0 1090.6 L1531.1 1091.0 L1526.3 1091.3 L1521.4 1091.5 L1516.5 1091.7 L1511.6 1091.9 L1506.7 1092.0 L1501.8 1092.2 L1497.0 1092.2 L1492.1 1092.3 L1487.2 1092.4 L1482.3 1092.4 L1477.4 1092.4 L1472.5 1092.5 L1467.7 1092.5 L1462.8 1092.5 L1457.9 1092.5 L1453.0 1092.5 L1453.0 1092.5 L1448.1 1092.5 L1443.2 1092.5 L1438.3 1092.5 L1433.5 1092.5 L1428.6 1092.4 L1423.7 1092.4 L1418.8 1092.4 L1413.9 1092.3 L1409.0 1092.2 L1404.2 1092.2 L1399.3 1092.0 L1394.4 1091.9 L1389.5 1091.7 L1384.6 1091.5 L1379.7 1091.3 L1374.9 1091.0 L1370.0 1090.6 L1365.1 1090.2 L1360.2 1089.7 L1355.3 1089.1 L1350.4 1088.2 L1345.6 1086.9 L1340.7 1084.8 L1335.8 1081.4 L1330.9 1074.5 L1330.4 1073.4 L1330.0 1072.2 L1329.5 1071.0 L1329.0 1069.6 L1328.5 1068.0 L1328.1 1066.0 L1327.6 1063.8 L1327.1 1061.3 L1326.7 1058.5 L1326.2 1054.9 L1325.7 1050.5 L1325.3 1045.2 L1324.8 1038.9 L1324.3 1029.8 L1323.8 1017.2 L1323.4 996.8 L1322.9 883.0Z" fill="#ff3300"/>
<path d="M1325.9 883.0 L1326.4 781.1 L1326.8 762.7 L1327.3 750.2 L1327.8 741.2 L1328.3 733.8 L1328.7 727.8 L1329.2 723.1 L1329.7 719.2 L1330.1 715.6 L1330.6 712.5 L1331.1 709.8 L1331.5 707.6 L1332.0 705.8 L1332.5 704.3 L1333.0 702.9 L1333.4 701.7 L1333.9 700.5 L1338.7 692.8 L1343.4 688.0 L1348.2 684.7 L1353.0 682.7 L1357.7 681.4 L1362.5 680.4 L1367.2 679.6 L1372.0 679.1 L1376.8 678.6 L1381.5 678.2 L1386.3 677.9 L1391.1 677.6 L1395.8 677.4 L1400.6 677.2 L1405.4 677.0 L1410.1 676.9 L1414.9 676.8 L1419.7 676.7 L1424.4 676.6 L1429.2 676.6 L1433.9 676.6 L1438.7 676.5 L1443.5 676.5 L1448.2 676.5 L1453.0 676.5 L1453.0 676.5 L1457.8 676.5 L1462.5 676.5 L1467.3 676.5 L1472.1 676.6 L1476.8 676.6 L1481.6 676.6 L1486.3 676.7 L1491.1 676.8 L1495.9 676.9 L1500.6 677.0 L1505.4 677.2 L1510.2 677.4 L1514.9 677.6 L1519.7 677.9 L1524.5 678.2 L1529.2 678.6 L1534.0 679.1 L1538.8 679.6 L1543.5 680.4 L1548.3 681.4 L1553.0 682.7 L1557.8 684.7 L1562.6 688.0 L1567.3 692.8 L1572.1 700.5 L1572.6 701.7 L1573.0 702.9 L1573.5 704.3 L1574.0 705.8 L1574.5 707.6 L1574.9 709.8 L1575.4 712.5 L1575.9 715.6 L1576.3 719.2 L1576.8 723.1 L1577.3 727.8 L1577.7 733.8 L1578.2 741.2 L1578.7 750.2 L1579.2 762.7 L1579.6 781.1 L1580.1 883.0 L1580.1 883.0 L1579.6 984.9 L1579.2 1003.3 L1578.7 1015.8 L1578.2 1024.8 L1577.7 1032.2 L1577.3 1038.2 L1576.8 1042.9 L1576.3 1046.8 L1575.9 1050.4 L1575.4 1053.5 L1574.9 1056.2 L1574.5 1058.4 L1574.0 1060.2 L1573.5 1061.7 L1573.0 1063.1 L1572.6 1064.3 L1572.1 1065.5 L1567.3 1073.2 L1562.6 1078.0 L1557.8 1081.3 L1553.0 1083.3 L1548.3 1084.6 L1543.5 1085.6 L1538.8 1086.4 L1534.0 1086.9 L1529.2 1087.4 L1524.5 1087.8 L1519.7 1088.1 L1514.9 1088.4 L1510.2 1088.6 L1505.4 1088.8 L1500.6 1089.0 L1495.9 1089.1 L1491.1 1089.2 L1486.3 1089.3 L1481.6 1089.4 L1476.8 1089.4 L1472.1 1089.4 L1467.3 1089.5 L1462.5 1089.5 L1457.8 1089.5 L1453.0 1089.5 L1453.0 1089.5 L1448.2 1089.5 L1443.5 1089.5 L1438.7 1089.5 L1433.9 1089.4 L1429.2 1089.4 L1424.4 1089.4 L1419.7 1089.3 L1414.9 1089.2 L1410.1 1089.1 L1405.4 1089.0 L1400.6 1088.8 L1395.8 1088.6 L1391.1 1088.4 L1386.3 1088.1 L1381.5 1087.8 L1376.8 1087.4 L1372.0 1086.9 L1367.2 1086.4 L1362.5 1085.6 L1357.7 1084.6 L1353.0 1083.3 L1348.2 1081.3 L1343.4 1078.0 L1338.7 1073.2 L1333.9 1065.5 L1333.4 1064.3 L1333.0 1063.1 L1332.5 1061.7 L1332.0 1060.2 L1331.5 1058.4 L1331.1 1056.2 L1330.6 1053.5 L1330.1 1050.4 L1329.7 1046.8 L1329.2 1042.9 L1328.7 1038.2 L1328.3 1032.2 L1327.8 1024.8 L1327.3 1015.8 L1326.8 1003.3 L1326.4 984.9 L1325.9 883.0Z" fill="#ff7800"/>
<path d="M1329.0 883.0 L1329.5 789.2 L1329.9 770.7 L1330.4 758.9 L1330.9 750.0 L1331.4 743.2 L1331.8 737.6 L1332.3 733.0 L1332.8 729.2 L1333.2 726.0 L1333.7 723.3 L1334.2 721.0 L1334.6 718.9 L1335.1 716.9 L1335.6 715.1 L1336.1 713.3 L1336.5 711.7 L1337.0 710.2 L1341.6 700.3 L1346.3 694.7 L1350.9 691.1 L1355.6 688.6 L1360.2 686.7 L1364.8 685.3 L1369.5 684.2 L1374.1 683.4 L1378.8 682.6 L1383.4 682.1 L1388.0 681.5 L1392.7 681.1 L1397.3 680.8 L1402.0 680.5 L1406.6 680.3 L1411.2 680.1 L1415.9 680.0 L1420.5 679.9 L1425.2 679.8 L1429.8 679.7 L1434.4 679.7 L1439.1 679.6 L1443.7 679.6 L1448.4 679.6 L1453.0 679.6 L1453.0 679.6 L1457.6 679.6 L1462.3 679.6 L1466.9 679.6 L1471.6 679.7 L1476.2 679.7 L1480.8 679.8 L1485.5 679.9 L1490.1 680.0 L1494.8 680.1 L1499.4 680.3 L1504.0 680.5 L1508.7 680.8 L1513.3 681.1 L1518.0 681.5 L1522.6 682.1 L1527.2 682.6 L1531.9 683.4 L1536.5 684.2 L1541.2 685.3 L1545.8 686.7 L1550.4 688.6 L1555.1 691.1 L1559.7 694.7 L1564.4 700.3 L1569.0 710.2 L1569.5 711.7 L1569.9 713.3 L1570.4 715.1 L1570.9 716.9 L1571.4 718.9 L1571.8 721.0 L1572.3 723.3 L1572.8 726.0 L1573.2 729.2 L1573.7 733.0 L1574.2 737.6 L1574.6 743.2 L1575.1 750.0 L1575.6 758.9 L1576.1 770.7 L1576.5 789.2 L1577.0 883.0 L1577.0 883.0 L1576.5 976.8 L1576.1 995.3 L1575.6 1007.1 L1575.1 1016.0 L1574.6 1022.8 L1574.2 1028.4 L1573.7 1033.0 L1573.2 1036.8 L1572.8 1040.0 L1572.3 1042.7 L1571.8 1045.0 L1571.4 1047.1 L1570.9 1049.1 L1570.4 1050.9 L1569.9 1052.7 L1569.5 1054.3 L1569.0 1055.8 L1564.4 1065.7 L1559.7 1071.3 L1555.1 1074.9 L1550.4 1077.4 L1545.8 1079.3 L1541.2 1080.7 L1536.5 1081.8 L1531.9 1082.6 L1527.2 1083.4 L1522.6 1083.9 L1518.0 1084.5 L1513.3 1084.9 L1508.7 1085.2 L1504.0 1085.5 L1499.4 1085.7 L1494.8 1085.9 L1490.1 1086.0 L1485.5 1086.1 L1480.8 1086.2 L1476.2 1086.3 L1471.6 1086.3 L1466.9 1086.4 L1462.3 1086.4 L1457.6 1086.4 L1453.0 1086.4 L1453.0 1086.4 L1448.4 1086.4 L1443.7 1086.4 L1439.1 1086.4 L1434.4 1086.3 L1429.8 1086.3 L1425.2 1086.2 L1420.5 1086.1 L1415.9 1086.0 L1411.2 1085.9 L1406.6 1085.7 L1402.0 1085.5 L1397.3 1085.2 L1392.7 1084.9 L1388.0 1084.5 L1383.4 1083.9 L1378.8 1083.4 L1374.1 1082.6 L1369.5 1081.8 L1364.8 1080.7 L1360.2 1079.3 L1355.6 1077.4 L1350.9 1074.9 L1346.3 1071.3 L1341.6 1065.7 L1337.0 1055.8 L1336.5 1054.3 L1336.1 1052.7 L1335.6 1050.9 L1335.1 1049.1 L1334.6 1047.1 L1334.2 1045.0 L1333.7 1042.7 L1333.2 1040.0 L1332.8 1036.8 L1332.3 1033.0 L1331.8 1028.4 L1331.4 1022.8 L1330.9 1016.0 L1330.4 1007.1 L1329.9 995.3 L1329.5 976.8 L1329.0 883.0Z" fill="#ffb400"/>
<path d="M1332.1 883.0 L1332.6 800.8 L1333.0 781.3 L1333.5 771.4 L1334.0 763.8 L1334.5 757.3 L1334.9 752.0 L1335.4 747.5 L1335.9 743.5 L1336.3 739.7 L1336.8 736.2 L1337.3 733.1 L1337.7 730.2 L1338.2 727.7 L1338.7 725.5 L1339.2 723.5 L1339.6 721.7 L1340.1 720.0 L1344.6 708.2 L1349.1 701.3 L1353.6 697.1 L1358.2 694.5 L1362.7 692.5 L1367.2 690.8 L1371.7 689.4 L1376.2 688.3 L1380.7 687.3 L1385.3 686.5 L1389.8 685.8 L1394.3 685.3 L1398.8 684.8 L1403.3 684.4 L1407.8 684.1 L1412.4 683.9 L1416.9 683.7 L1421.4 683.6 L1425.9 683.5 L1430.4 683.4 L1434.9 683.3 L1439.5 683.3 L1444.0 683.2 L1448.5 683.2 L1453.0 683.2 L1453.0 683.2 L1457.5 683.2 L1462.0 683.2 L1466.5 683.3 L1471.1 683.3 L1475.6 683.4 L1480.1 683.5 L1484.6 683.6 L1489.1 683.7 L1493.6 683.9 L1498.2 684.1 L1502.7 684.4 L1507.2 684.8 L1511.7 685.3 L1516.2 685.8 L1520.7 686.5 L1525.3 687.3 L1529.8 688.3 L1534.3 689.4 L1538.8 690.8 L1543.3 692.5 L1547.8 694.5 L1552.4 697.1 L1556.9 701.3 L1561.4 708.2 L1565.9 720.0 L1566.4 721.7 L1566.8 723.5 L1567.3 725.5 L1567.8 727.7 L1568.3 730.2 L1568.7 733.1 L1569.2 736.2 L1569.7 739.7 L1570.1 743.5 L1570.6 747.5 L1571.1 752.0 L1571.5 757.3 L1572.0 763.8 L1572.5 771.4 L1573.0 781.3 L1573.4 800.8 L1573.9 883.0 L1573.9 883.0 L1573.4 965.2 L1573.0 984.7 L1572.5 994.6 L1572.0 1002.2 L1571.5 1008.7 L1571.1 1014.0 L1570.6 1018.5 L1570.1 1022.5 L1569.7 1026.3 L1569.2 1029.8 L1568.7 1032.9 L1568.3 1035.8 L1567.8 1038.3 L1567.3 1040.5 L1566.8 1042.5 L1566.4 1044.3 L1565.9 1046.0 L1561.4 1057.8 L1556.9 1064.7 L1552.4 1068.9 L1547.8 1071.5 L1543.3 1073.5 L1538.8 1075.2 L1534.3 1076.6 L1529.8 1077.7 L1525.3 1078.7 L1520.7 1079.5 L1516.2 1080.2 L1511.7 1080.7 L1507.2 1081.2 L1502.7 1081.6 L1498.2 1081.9 L1493.6 1082.1 L1489.1 1082.3 L1484.6 1082.4 L1480.1 1082.5 L1475.6 1082.6 L1471.1 1082.7 L1466.5 1082.7 L1462.0 1082.8 L1457.5 1082.8 L1453.0 1082.8 L1453.0 1082.8 L1448.5 1082.8 L1444.0 1082.8 L1439.5 1082.7 L1434.9 1082.7 L1430.4 1082.6 L1425.9 1082.5 L1421.4 1082.4 L1416.9 1082.3 L1412.4 1082.1 L1407.8 1081.9 L1403.3 1081.6 L1398.8 1081.2 L1394.3 1080.7 L1389.8 1080.2 L1385.3 1079.5 L1380.7 1078.7 L1376.2 1077.7 L1371.7 1076.6 L1367.2 1075.2 L1362.7 1073.5 L1358.2 1071.5 L1353.6 1068.9 L1349.1 1064.7 L1344.6 1057.8 L1340.1 1046.0 L1339.6 1044.3 L1339.2 1042.5 L1338.7 1040.5 L1338.2 1038.3 L1337.7 1035.8 L1337.3 1032.9 L1336.8 1029.8 L1336.3 1026.3 L1335.9 1022.5 L1335.4 1018.5 L1334.9 1014.0 L1334.5 1008.7 L1334.0 1002.2 L1333.5 994.6 L1333.0 984.7 L1332.6 965.2 L1332.1 883.0Z" fill="#ffdc00"/>
<path d="M1336.1 883.0 L1336.6 809.2 L1337.0 788.9 L1337.5 778.1 L1338.0 770.7 L1338.5 764.6 L1338.9 759.1 L1339.4 754.4 L1339.9 750.4 L1340.3 746.9 L1340.8 743.8 L1341.3 740.8 L1341.7 738.1 L1342.2 735.6 L1342.7 733.2 L1343.2 731.1 L1343.6 729.1 L1344.1 727.3 L1348.5 714.9 L1352.8 707.8 L1357.2 703.6 L1361.5 700.3 L1365.9 697.8 L1370.2 696.0 L1374.6 694.7 L1378.9 693.5 L1383.3 692.5 L1387.7 691.6 L1392.0 690.8 L1396.4 690.2 L1400.7 689.6 L1405.1 689.1 L1409.4 688.7 L1413.8 688.4 L1418.2 688.2 L1422.5 688.0 L1426.9 687.8 L1431.2 687.7 L1435.6 687.6 L1439.9 687.6 L1444.3 687.5 L1448.6 687.5 L1453.0 687.5 L1453.0 687.5 L1457.4 687.5 L1461.7 687.5 L1466.1 687.6 L1470.4 687.6 L1474.8 687.7 L1479.1 687.8 L1483.5 688.0 L1487.8 688.2 L1492.2 688.4 L1496.6 688.7 L1500.9 689.1 L1505.3 689.6 L1509.6 690.2 L1514.0 690.8 L1518.3 691.6 L1522.7 692.5 L1527.1 693.5 L1531.4 694.7 L1535.8 696.0 L1540.1 697.8 L1544.5 700.3 L1548.8 703.6 L1553.2 707.8 L1557.5 714.9 L1561.9 727.3 L1562.4 729.1 L1562.8 731.1 L1563.3 733.2 L1563.8 735.6 L1564.3 738.1 L1564.7 740.8 L1565.2 743.8 L1565.7 746.9 L1566.1 750.4 L1566.6 754.4 L1567.1 759.1 L1567.5 764.6 L1568.0 770.7 L1568.5 778.1 L1569.0 788.9 L1569.4 809.2 L1569.9 883.0 L1569.9 883.0 L1569.4 956.8 L1569.0 977.1 L1568.5 987.9 L1568.0 995.3 L1567.5 1001.4 L1567.1 1006.9 L1566.6 1011.6 L1566.1 1015.6 L1565.7 1019.1 L1565.2 1022.2 L1564.7 1025.2 L1564.3 1027.9 L1563.8 1030.4 L1563.3 1032.8 L1562.8 1034.9 L1562.4 1036.9 L1561.9 1038.7 L1557.5 1051.1 L1553.2 1058.2 L1548.8 1062.4 L1544.5 1065.7 L1540.1 1068.2 L1535.8 1070.0 L1531.4 1071.3 L1527.1 1072.5 L1522.7 1073.5 L1518.3 1074.4 L1514.0 1075.2 L1509.6 1075.8 L1505.3 1076.4 L1500.9 1076.9 L1496.6 1077.3 L1492.2 1077.6 L1487.8 1077.8 L1483.5 1078.0 L1479.1 1078.2 L1474.8 1078.3 L1470.4 1078.4 L1466.1 1078.4 L1461.7 1078.5 L1457.4 1078.5 L1453.0 1078.5 L1453.0 1078.5 L1448.6 1078.5 L1444.3 1078.5 L1439.9 1078.4 L1435.6 1078.4 L1431.2 1078.3 L1426.9 1078.2 L1422.5 1078.0 L1418.2 1077.8 L1413.8 1077.6 L1409.4 1077.3 L1405.1 1076.9 L1400.7 1076.4 L1396.4 1075.8 L1392.0 1075.2 L1387.7 1074.4 L1383.3 1073.5 L1378.9 1072.5 L1374.6 1071.3 L1370.2 1070.0 L1365.9 1068.2 L1361.5 1065.7 L1357.2 1062.4 L1352.8 1058.2 L1348.5 1051.1 L1344.1 1038.7 L1343.6 1036.9 L1343.2 1034.9 L1342.7 1032.8 L1342.2 1030.4 L1341.7 1027.9 L1341.3 1025.2 L1340.8 1022.2 L1340.3 1019.1 L1339.9 1015.6 L1339.4 1011.6 L1338.9 1006.9 L1338.5 1001.4 L1338.0 995.3 L1337.5 987.9 L1337.0 977.1 L1336.6 956.8 L1336.1 883.0Z" fill="#f0f500"/>
<path d="M1340.2 883.0 L1340.7 815.2 L1341.1 796.0 L1341.6 784.1 L1342.1 776.9 L1342.6 771.3 L1343.0 766.4 L1343.5 762.0 L1344.0 757.9 L1344.4 754.2 L1344.9 751.0 L1345.4 748.1 L1345.8 745.3 L1346.3 742.7 L1346.8 740.2 L1347.3 737.9 L1347.7 735.7 L1348.2 733.8 L1352.4 722.2 L1356.6 715.2 L1360.8 710.1 L1365.0 706.6 L1369.2 704.1 L1373.4 701.9 L1377.5 700.1 L1381.7 698.6 L1385.9 697.3 L1390.1 696.3 L1394.3 695.6 L1398.5 694.9 L1402.7 694.3 L1406.9 693.9 L1411.1 693.5 L1415.3 693.2 L1419.5 693.0 L1423.7 692.8 L1427.8 692.7 L1432.0 692.5 L1436.2 692.5 L1440.4 692.4 L1444.6 692.3 L1448.8 692.3 L1453.0 692.3 L1453.0 692.3 L1457.2 692.3 L1461.4 692.3 L1465.6 692.4 L1469.8 692.5 L1474.0 692.5 L1478.2 692.7 L1482.3 692.8 L1486.5 693.0 L1490.7 693.2 L1494.9 693.5 L1499.1 693.9 L1503.3 694.3 L1507.5 694.9 L1511.7 695.6 L1515.9 696.3 L1520.1 697.3 L1524.3 698.6 L1528.5 700.1 L1532.6 701.9 L1536.8 704.1 L1541.0 706.6 L1545.2 710.1 L1549.4 715.2 L1553.6 722.2 L1557.8 733.8 L1558.3 735.7 L1558.7 737.9 L1559.2 740.2 L1559.7 742.7 L1560.2 745.3 L1560.6 748.1 L1561.1 751.0 L1561.6 754.2 L1562.0 757.9 L1562.5 762.0 L1563.0 766.4 L1563.4 771.3 L1563.9 776.9 L1564.4 784.1 L1564.9 796.0 L1565.3 815.2 L1565.8 883.0 L1565.8 883.0 L1565.3 950.8 L1564.9 970.0 L1564.4 981.9 L1563.9 989.1 L1563.4 994.7 L1563.0 999.6 L1562.5 1004.0 L1562.0 1008.1 L1561.6 1011.8 L1561.1 1015.0 L1560.6 1017.9 L1560.2 1020.7 L1559.7 1023.3 L1559.2 1025.8 L1558.7 1028.1 L1558.3 1030.3 L1557.8 1032.2 L1553.6 1043.8 L1549.4 1050.8 L1545.2 1055.9 L1541.0 1059.4 L1536.8 1061.9 L1532.6 1064.1 L1528.5 1065.9 L1524.3 1067.4 L1520.1 1068.7 L1515.9 1069.7 L1511.7 1070.4 L1507.5 1071.1 L1503.3 1071.7 L1499.1 1072.1 L1494.9 1072.5 L1490.7 1072.8 L1486.5 1073.0 L1482.3 1073.2 L1478.2 1073.3 L1474.0 1073.5 L1469.8 1073.5 L1465.6 1073.6 L1461.4 1073.7 L1457.2 1073.7 L1453.0 1073.7 L1453.0 1073.7 L1448.8 1073.7 L1444.6 1073.7 L1440.4 1073.6 L1436.2 1073.5 L1432.0 1073.5 L1427.8 1073.3 L1423.7 1073.2 L1419.5 1073.0 L1415.3 1072.8 L1411.1 1072.5 L1406.9 1072.1 L1402.7 1071.7 L1398.5 1071.1 L1394.3 1070.4 L1390.1 1069.7 L1385.9 1068.7 L1381.7 1067.4 L1377.5 1065.9 L1373.4 1064.1 L1369.2 1061.9 L1365.0 1059.4 L1360.8 1055.9 L1356.6 1050.8 L1352.4 1043.8 L1348.2 1032.2 L1347.7 1030.3 L1347.3 1028.1 L1346.8 1025.8 L1346.3 1023.3 L1345.8 1020.7 L1345.4 1017.9 L1344.9 1015.0 L1344.4 1011.8 L1344.0 1008.1 L1343.5 1004.0 L1343.0 999.6 L1342.6 994.7 L1342.1 989.1 L1341.6 981.9 L1341.1 970.0 L1340.7 950.8 L1340.2 883.0Z" fill="#80b000"/>
<path d="M1344.8 883.0 L1345.2 819.6 L1345.7 800.5 L1346.2 788.2 L1346.6 780.4 L1347.1 774.8 L1347.6 770.0 L1348.0 765.9 L1348.5 762.2 L1349.0 758.8 L1349.5 755.8 L1349.9 753.2 L1350.4 750.8 L1350.9 748.7 L1351.3 746.8 L1351.8 744.9 L1352.3 743.2 L1352.8 741.5 L1356.8 730.2 L1360.8 722.9 L1364.8 717.9 L1368.8 713.9 L1372.8 710.8 L1376.8 708.3 L1380.8 706.4 L1384.8 704.8 L1388.8 703.4 L1392.8 702.2 L1396.9 701.2 L1400.9 700.3 L1404.9 699.5 L1408.9 698.9 L1412.9 698.5 L1416.9 698.1 L1420.9 697.8 L1424.9 697.6 L1428.9 697.4 L1433.0 697.3 L1437.0 697.2 L1441.0 697.1 L1445.0 697.0 L1449.0 697.0 L1453.0 697.0 L1453.0 697.0 L1457.0 697.0 L1461.0 697.0 L1465.0 697.1 L1469.0 697.2 L1473.0 697.3 L1477.1 697.4 L1481.1 697.6 L1485.1 697.8 L1489.1 698.1 L1493.1 698.5 L1497.1 698.9 L1501.1 699.5 L1505.1 700.3 L1509.1 701.2 L1513.2 702.2 L1517.2 703.4 L1521.2 704.8 L1525.2 706.4 L1529.2 708.3 L1533.2 710.8 L1537.2 713.9 L1541.2 717.9 L1545.2 722.9 L1549.2 730.2 L1553.2 741.5 L1553.7 743.2 L1554.2 744.9 L1554.7 746.8 L1555.1 748.7 L1555.6 750.8 L1556.1 753.2 L1556.5 755.8 L1557.0 758.8 L1557.5 762.2 L1558.0 765.9 L1558.4 770.0 L1558.9 774.8 L1559.4 780.4 L1559.8 788.2 L1560.3 800.5 L1560.8 819.6 L1561.2 883.0 L1561.2 883.0 L1560.8 946.4 L1560.3 965.5 L1559.8 977.8 L1559.4 985.6 L1558.9 991.2 L1558.4 996.0 L1558.0 1000.1 L1557.5 1003.8 L1557.0 1007.2 L1556.5 1010.2 L1556.1 1012.8 L1555.6 1015.2 L1555.1 1017.3 L1554.7 1019.2 L1554.2 1021.1 L1553.7 1022.8 L1553.2 1024.5 L1549.2 1035.8 L1545.2 1043.1 L1541.2 1048.1 L1537.2 1052.1 L1533.2 1055.2 L1529.2 1057.7 L1525.2 1059.6 L1521.2 1061.2 L1517.2 1062.6 L1513.2 1063.8 L1509.1 1064.8 L1505.1 1065.7 L1501.1 1066.5 L1497.1 1067.1 L1493.1 1067.5 L1489.1 1067.9 L1485.1 1068.2 L1481.1 1068.4 L1477.1 1068.6 L1473.0 1068.7 L1469.0 1068.8 L1465.0 1068.9 L1461.0 1069.0 L1457.0 1069.0 L1453.0 1069.0 L1453.0 1069.0 L1449.0 1069.0 L1445.0 1069.0 L1441.0 1068.9 L1437.0 1068.8 L1433.0 1068.7 L1428.9 1068.6 L1424.9 1068.4 L1420.9 1068.2 L1416.9 1067.9 L1412.9 1067.5 L1408.9 1067.1 L1404.9 1066.5 L1400.9 1065.7 L1396.9 1064.8 L1392.8 1063.8 L1388.8 1062.6 L1384.8 1061.2 L1380.8 1059.6 L1376.8 1057.7 L1372.8 1055.2 L1368.8 1052.1 L1364.8 1048.1 L1360.8 1043.1 L1356.8 1035.8 L1352.8 1024.5 L1352.3 1022.8 L1351.8 1021.1 L1351.3 1019.2 L1350.9 1017.3 L1350.4 1015.2 L1349.9 1012.8 L1349.5 1010.2 L1349.0 1007.2 L1348.5 1003.8 L1348.0 1000.1 L1347.6 996.0 L1347.1 991.2 L1346.6 985.6 L1346.2 977.8 L1345.7 965.5 L1345.2 946.4 L1344.8 883.0Z" fill="#0f6e00"/>
<path d="M1349.3 883.0 L1349.8 826.0 L1350.2 808.4 L1350.7 797.1 L1351.2 788.6 L1351.7 782.7 L1352.1 778.3 L1352.6 774.6 L1353.1 771.4 L1353.5 768.4 L1354.0 765.7 L1354.5 763.1 L1354.9 760.7 L1355.4 758.3 L1355.9 756.1 L1356.4 754.2 L1356.8 752.3 L1357.3 750.6 L1361.1 739.5 L1365.0 731.7 L1368.8 726.1 L1372.6 722.0 L1376.4 718.7 L1380.3 715.9 L1384.1 713.5 L1387.9 711.4 L1391.8 709.8 L1395.6 708.5 L1399.4 707.3 L1403.2 706.4 L1407.1 705.6 L1410.9 705.0 L1414.7 704.6 L1418.5 704.2 L1422.4 703.9 L1426.2 703.6 L1430.0 703.4 L1433.9 703.3 L1437.7 703.1 L1441.5 703.0 L1445.3 703.0 L1449.2 702.9 L1453.0 702.9 L1453.0 702.9 L1456.8 702.9 L1460.7 703.0 L1464.5 703.0 L1468.3 703.1 L1472.1 703.3 L1476.0 703.4 L1479.8 703.6 L1483.6 703.9 L1487.5 704.2 L1491.3 704.6 L1495.1 705.0 L1498.9 705.6 L1502.8 706.4 L1506.6 707.3 L1510.4 708.5 L1514.2 709.8 L1518.1 711.4 L1521.9 713.5 L1525.7 715.9 L1529.6 718.7 L1533.4 722.0 L1537.2 726.1 L1541.0 731.7 L1544.9 739.5 L1548.7 750.6 L1549.2 752.3 L1549.6 754.2 L1550.1 756.1 L1550.6 758.3 L1551.1 760.7 L1551.5 763.1 L1552.0 765.7 L1552.5 768.4 L1552.9 771.4 L1553.4 774.6 L1553.9 778.3 L1554.3 782.7 L1554.8 788.6 L1555.3 797.1 L1555.8 808.4 L1556.2 826.0 L1556.7 883.0 L1556.7 883.0 L1556.2 940.0 L1555.8 957.6 L1555.3 968.9 L1554.8 977.4 L1554.3 983.3 L1553.9 987.7 L1553.4 991.4 L1552.9 994.6 L1552.5 997.6 L1552.0 1000.3 L1551.5 1002.9 L1551.1 1005.3 L1550.6 1007.7 L1550.1 1009.9 L1549.6 1011.8 L1549.2 1013.7 L1548.7 1015.4 L1544.9 1026.5 L1541.0 1034.3 L1537.2 1039.9 L1533.4 1044.0 L1529.6 1047.3 L1525.7 1050.1 L1521.9 1052.5 L1518.1 1054.6 L1514.2 1056.2 L1510.4 1057.5 L1506.6 1058.7 L1502.8 1059.6 L1498.9 1060.4 L1495.1 1061.0 L1491.3 1061.4 L1487.5 1061.8 L1483.6 1062.1 L1479.8 1062.4 L1476.0 1062.6 L1472.1 1062.7 L1468.3 1062.9 L1464.5 1063.0 L1460.7 1063.0 L1456.8 1063.1 L1453.0 1063.1 L1453.0 1063.1 L1449.2 1063.1 L1445.3 1063.0 L1441.5 1063.0 L1437.7 1062.9 L1433.9 1062.7 L1430.0 1062.6 L1426.2 1062.4 L1422.4 1062.1 L1418.5 1061.8 L1414.7 1061.4 L1410.9 1061.0 L1407.1 1060.4 L1403.2 1059.6 L1399.4 1058.7 L1395.6 1057.5 L1391.8 1056.2 L1387.9 1054.6 L1384.1 1052.5 L1380.3 1050.1 L1376.4 1047.3 L1372.6 1044.0 L1368.8 1039.9 L1365.0 1034.3 L1361.1 1026.5 L1357.3 1015.4 L1356.8 1013.7 L1356.4 1011.8 L1355.9 1009.9 L1355.4 1007.7 L1354.9 1005.3 L1354.5 1002.9 L1354.0 1000.3 L1353.5 997.6 L1353.1 994.6 L1352.6 991.4 L1352.1 987.7 L1351.7 983.3 L1351.2 977.4 L1350.7 968.9 L1350.2 957.6 L1349.8 940.0 L1349.3 883.0Z" fill="#00a060"/>
<path d="M1355.0 883.0 L1355.5 832.4 L1355.9 815.8 L1356.4 804.8 L1356.9 796.6 L1357.4 789.9 L1357.8 784.7 L1358.3 780.8 L1358.8 777.6 L1359.2 774.8 L1359.7 772.2 L1360.2 769.8 L1360.6 767.6 L1361.1 765.5 L1361.6 763.5 L1362.1 761.7 L1362.5 759.9 L1363.0 758.1 L1366.6 748.0 L1370.2 740.7 L1373.8 734.9 L1377.4 730.3 L1381.0 726.6 L1384.6 723.7 L1388.2 721.2 L1391.8 719.2 L1395.4 717.5 L1399.0 716.0 L1402.6 714.6 L1406.2 713.5 L1409.8 712.6 L1413.4 711.9 L1417.0 711.4 L1420.6 710.9 L1424.2 710.6 L1427.8 710.3 L1431.4 710.0 L1435.0 709.8 L1438.6 709.7 L1442.2 709.6 L1445.8 709.5 L1449.4 709.4 L1453.0 709.4 L1453.0 709.4 L1456.6 709.4 L1460.2 709.5 L1463.8 709.6 L1467.4 709.7 L1471.0 709.8 L1474.6 710.0 L1478.2 710.3 L1481.8 710.6 L1485.4 710.9 L1489.0 711.4 L1492.6 711.9 L1496.2 712.6 L1499.8 713.5 L1503.4 714.6 L1507.0 716.0 L1510.6 717.5 L1514.2 719.2 L1517.8 721.2 L1521.4 723.7 L1525.0 726.6 L1528.6 730.3 L1532.2 734.9 L1535.8 740.7 L1539.4 748.0 L1543.0 758.1 L1543.5 759.9 L1543.9 761.7 L1544.4 763.5 L1544.9 765.5 L1545.4 767.6 L1545.8 769.8 L1546.3 772.2 L1546.8 774.8 L1547.2 777.6 L1547.7 780.8 L1548.2 784.7 L1548.6 789.9 L1549.1 796.6 L1549.6 804.8 L1550.1 815.8 L1550.5 832.4 L1551.0 883.0 L1551.0 883.0 L1550.5 933.6 L1550.1 950.2 L1549.6 961.2 L1549.1 969.4 L1548.6 976.1 L1548.2 981.3 L1547.7 985.2 L1547.2 988.4 L1546.8 991.2 L1546.3 993.8 L1545.8 996.2 L1545.4 998.4 L1544.9 1000.5 L1544.4 1002.5 L1543.9 1004.3 L1543.5 1006.1 L1543.0 1007.9 L1539.4 1018.0 L1535.8 1025.3 L1532.2 1031.1 L1528.6 1035.7 L1525.0 1039.4 L1521.4 1042.3 L1517.8 1044.8 L1514.2 1046.8 L1510.6 1048.5 L1507.0 1050.0 L1503.4 1051.4 L1499.8 1052.5 L1496.2 1053.4 L1492.6 1054.1 L1489.0 1054.6 L1485.4 1055.1 L1481.8 1055.4 L1478.2 1055.7 L1474.6 1056.0 L1471.0 1056.2 L1467.4 1056.3 L1463.8 1056.4 L1460.2 1056.5 L1456.6 1056.6 L1453.0 1056.6 L1453.0 1056.6 L1449.4 1056.6 L1445.8 1056.5 L1442.2 1056.4 L1438.6 1056.3 L1435.0 1056.2 L1431.4 1056.0 L1427.8 1055.7 L1424.2 1055.4 L1420.6 1055.1 L1417.0 1054.6 L1413.4 1054.1 L1409.8 1053.4 L1406.2 1052.5 L1402.6 1051.4 L1399.0 1050.0 L1395.4 1048.5 L1391.8 1046.8 L1388.2 1044.8 L1384.6 1042.3 L1381.0 1039.4 L1377.4 1035.7 L1373.8 1031.1 L1370.2 1025.3 L1366.6 1018.0 L1363.0 1007.9 L1362.5 1006.1 L1362.1 1004.3 L1361.6 1002.5 L1361.1 1000.5 L1360.6 998.4 L1360.2 996.2 L1359.7 993.8 L1359.2 991.2 L1358.8 988.4 L1358.3 985.2 L1357.8 981.3 L1357.4 976.1 L1356.9 969.4 L1356.4 961.2 L1355.9 950.2 L1355.5 933.6 L1355.0 883.0Z" fill="#00e0d0"/>
<path d="M1361.7 883.0 L1362.2 839.1 L1362.6 823.7 L1363.1 813.4 L1363.6 805.6 L1364.1 799.3 L1364.5 794.0 L1365.0 789.3 L1365.5 785.5 L1365.9 782.5 L1366.4 780.0 L1366.9 777.7 L1367.3 775.6 L1367.8 773.7 L1368.3 771.9 L1368.8 770.2 L1369.2 768.5 L1369.7 767.0 L1373.0 757.5 L1376.4 750.4 L1379.7 745.0 L1383.0 740.3 L1386.4 736.3 L1389.7 733.0 L1393.0 730.4 L1396.4 728.1 L1399.7 726.2 L1403.0 724.5 L1406.4 723.2 L1409.7 722.2 L1413.0 721.4 L1416.3 720.7 L1419.7 720.1 L1423.0 719.6 L1426.3 719.2 L1429.7 718.9 L1433.0 718.6 L1436.3 718.4 L1439.7 718.2 L1443.0 718.1 L1446.3 718.0 L1449.7 717.9 L1453.0 717.9 L1453.0 717.9 L1456.3 717.9 L1459.7 718.0 L1463.0 718.1 L1466.3 718.2 L1469.7 718.4 L1473.0 718.6 L1476.3 718.9 L1479.7 719.2 L1483.0 719.6 L1486.3 720.1 L1489.7 720.7 L1493.0 721.4 L1496.3 722.2 L1499.6 723.2 L1503.0 724.5 L1506.3 726.2 L1509.6 728.1 L1513.0 730.4 L1516.3 733.0 L1519.6 736.3 L1523.0 740.3 L1526.3 745.0 L1529.6 750.4 L1533.0 757.5 L1536.3 767.0 L1536.8 768.5 L1537.2 770.2 L1537.7 771.9 L1538.2 773.7 L1538.7 775.6 L1539.1 777.7 L1539.6 780.0 L1540.1 782.5 L1540.5 785.5 L1541.0 789.3 L1541.5 794.0 L1541.9 799.3 L1542.4 805.6 L1542.9 813.4 L1543.4 823.7 L1543.8 839.1 L1544.3 883.0 L1544.3 883.0 L1543.8 926.9 L1543.4 942.3 L1542.9 952.6 L1542.4 960.4 L1541.9 966.7 L1541.5 972.0 L1541.0 976.7 L1540.5 980.5 L1540.1 983.5 L1539.6 986.0 L1539.1 988.3 L1538.7 990.4 L1538.2 992.3 L1537.7 994.1 L1537.2 995.8 L1536.8 997.5 L1536.3 999.0 L1533.0 1008.5 L1529.6 1015.6 L1526.3 1021.0 L1523.0 1025.7 L1519.6 1029.7 L1516.3 1033.0 L1513.0 1035.6 L1509.6 1037.9 L1506.3 1039.8 L1503.0 1041.5 L1499.6 1042.8 L1496.3 1043.8 L1493.0 1044.6 L1489.7 1045.3 L1486.3 1045.9 L1483.0 1046.4 L1479.7 1046.8 L1476.3 1047.1 L1473.0 1047.4 L1469.7 1047.6 L1466.3 1047.8 L1463.0 1047.9 L1459.7 1048.0 L1456.3 1048.1 L1453.0 1048.1 L1453.0 1048.1 L1449.7 1048.1 L1446.3 1048.0 L1443.0 1047.9 L1439.7 1047.8 L1436.3 1047.6 L1433.0 1047.4 L1429.7 1047.1 L1426.3 1046.8 L1423.0 1046.4 L1419.7 1045.9 L1416.3 1045.3 L1413.0 1044.6 L1409.7 1043.8 L1406.4 1042.8 L1403.0 1041.5 L1399.7 1039.8 L1396.4 1037.9 L1393.0 1035.6 L1389.7 1033.0 L1386.4 1029.7 L1383.0 1025.7 L1379.7 1021.0 L1376.4 1015.6 L1373.0 1008.5 L1369.7 999.0 L1369.2 997.5 L1368.8 995.8 L1368.3 994.1 L1367.8 992.3 L1367.3 990.4 L1366.9 988.3 L1366.4 986.0 L1365.9 983.5 L1365.5 980.5 L1365.0 976.7 L1364.5 972.0 L1364.1 966.7 L1363.6 960.4 L1363.1 952.6 L1362.6 942.3 L1362.2 926.9 L1361.7 883.0Z" fill="#00c0ff"/>
<path d="M1369.7 883.0 L1370.2 847.1 L1370.6 833.2 L1371.1 823.6 L1371.6 816.1 L1372.1 810.0 L1372.5 804.9 L1373.0 800.4 L1373.5 796.5 L1373.9 792.9 L1374.4 789.6 L1374.9 786.7 L1375.3 784.4 L1375.8 782.3 L1376.3 780.5 L1376.8 778.8 L1377.2 777.2 L1377.7 775.7 L1380.7 767.7 L1383.7 760.9 L1386.7 755.2 L1389.7 750.9 L1392.8 747.4 L1395.8 744.4 L1398.8 741.6 L1401.8 739.2 L1404.8 737.1 L1407.8 735.3 L1410.8 733.9 L1413.8 732.8 L1416.9 731.9 L1419.9 731.1 L1422.9 730.4 L1425.9 729.8 L1428.9 729.3 L1431.9 728.9 L1434.9 728.5 L1437.9 728.3 L1441.0 728.0 L1444.0 727.9 L1447.0 727.7 L1450.0 727.7 L1453.0 727.6 L1453.0 727.6 L1456.0 727.7 L1459.0 727.7 L1462.0 727.9 L1465.0 728.0 L1468.1 728.3 L1471.1 728.5 L1474.1 728.9 L1477.1 729.3 L1480.1 729.8 L1483.1 730.4 L1486.1 731.1 L1489.1 731.9 L1492.2 732.8 L1495.2 733.9 L1498.2 735.3 L1501.2 737.1 L1504.2 739.2 L1507.2 741.6 L1510.2 744.4 L1513.2 747.4 L1516.3 750.9 L1519.3 755.2 L1522.3 760.9 L1525.3 767.7 L1528.3 775.7 L1528.8 777.2 L1529.2 778.8 L1529.7 780.5 L1530.2 782.3 L1530.7 784.4 L1531.1 786.7 L1531.6 789.6 L1532.1 792.9 L1532.5 796.5 L1533.0 800.4 L1533.5 804.9 L1533.9 810.0 L1534.4 816.1 L1534.9 823.6 L1535.4 833.2 L1535.8 847.1 L1536.3 883.0 L1536.3 883.0 L1535.8 918.9 L1535.4 932.8 L1534.9 942.4 L1534.4 949.9 L1533.9 956.0 L1533.5 961.1 L1533.0 965.6 L1532.5 969.5 L1532.1 973.1 L1531.6 976.4 L1531.1 979.3 L1530.7 981.6 L1530.2 983.7 L1529.7 985.5 L1529.2 987.2 L1528.8 988.8 L1528.3 990.3 L1525.3 998.3 L1522.3 1005.1 L1519.3 1010.8 L1516.3 1015.1 L1513.2 1018.6 L1510.2 1021.6 L1507.2 1024.4 L1504.2 1026.8 L1501.2 1028.9 L1498.2 1030.7 L1495.2 1032.1 L1492.2 1033.2 L1489.1 1034.1 L1486.1 1034.9 L1483.1 1035.6 L1480.1 1036.2 L1477.1 1036.7 L1474.1 1037.1 L1471.1 1037.5 L1468.1 1037.7 L1465.0 1038.0 L1462.0 1038.1 L1459.0 1038.3 L1456.0 1038.3 L1453.0 1038.4 L1453.0 1038.4 L1450.0 1038.3 L1447.0 1038.3 L1444.0 1038.1 L1441.0 1038.0 L1437.9 1037.7 L1434.9 1037.5 L1431.9 1037.1 L1428.9 1036.7 L1425.9 1036.2 L1422.9 1035.6 L1419.9 1034.9 L1416.9 1034.1 L1413.8 1033.2 L1410.8 1032.1 L1407.8 1030.7 L1404.8 1028.9 L1401.8 1026.8 L1398.8 1024.4 L1395.8 1021.6 L1392.8 1018.6 L1389.7 1015.1 L1386.7 1010.8 L1383.7 1005.1 L1380.7 998.3 L1377.7 990.3 L1377.2 988.8 L1376.8 987.2 L1376.3 985.5 L1375.8 983.7 L1375.3 981.6 L1374.9 979.3 L1374.4 976.4 L1373.9 973.1 L1373.5 969.5 L1373.0 965.6 L1372.5 961.1 L1372.1 956.0 L1371.6 949.9 L1371.1 942.4 L1370.6 932.8 L1370.2 918.9 L1369.7 883.0Z" fill="#0050ff"/>
<path d="M1379.5 883.0 L1380.0 855.4 L1380.4 843.4 L1380.9 834.6 L1381.4 827.6 L1381.9 821.8 L1382.3 816.7 L1382.8 812.3 L1383.3 808.3 L1383.7 804.8 L1384.2 801.6 L1384.7 798.6 L1385.1 795.9 L1385.6 793.4 L1386.1 791.0 L1386.6 788.7 L1387.0 786.7 L1387.5 785.0 L1390.1 777.8 L1392.7 772.6 L1395.4 768.1 L1398.0 764.1 L1400.6 760.6 L1403.2 757.3 L1405.8 754.7 L1408.5 752.5 L1411.1 750.8 L1413.7 749.3 L1416.3 748.1 L1418.9 747.0 L1421.6 746.0 L1424.2 745.2 L1426.8 744.4 L1429.4 743.8 L1432.0 743.2 L1434.7 742.7 L1437.3 742.3 L1439.9 741.9 L1442.5 741.6 L1445.1 741.4 L1447.8 741.2 L1450.4 741.1 L1453.0 741.0 L1453.0 741.0 L1455.6 741.1 L1458.2 741.2 L1460.9 741.4 L1463.5 741.6 L1466.1 741.9 L1468.7 742.3 L1471.3 742.7 L1474.0 743.2 L1476.6 743.8 L1479.2 744.4 L1481.8 745.2 L1484.4 746.0 L1487.1 747.0 L1489.7 748.1 L1492.3 749.3 L1494.9 750.8 L1497.5 752.5 L1500.2 754.7 L1502.8 757.3 L1505.4 760.6 L1508.0 764.1 L1510.6 768.1 L1513.3 772.6 L1515.9 777.8 L1518.5 785.0 L1519.0 786.7 L1519.4 788.7 L1519.9 791.0 L1520.4 793.4 L1520.9 795.9 L1521.3 798.6 L1521.8 801.6 L1522.3 804.8 L1522.7 808.3 L1523.2 812.3 L1523.7 816.7 L1524.1 821.8 L1524.6 827.6 L1525.1 834.6 L1525.6 843.4 L1526.0 855.4 L1526.5 883.0 L1526.5 883.0 L1526.0 910.6 L1525.6 922.6 L1525.1 931.4 L1524.6 938.4 L1524.1 944.2 L1523.7 949.3 L1523.2 953.7 L1522.7 957.7 L1522.3 961.2 L1521.8 964.4 L1521.3 967.4 L1520.9 970.1 L1520.4 972.6 L1519.9 975.0 L1519.4 977.3 L1519.0 979.3 L1518.5 981.0 L1515.9 988.2 L1513.3 993.4 L1510.6 997.9 L1508.0 1001.9 L1505.4 1005.4 L1502.8 1008.7 L1500.2 1011.3 L1497.5 1013.5 L1494.9 1015.2 L1492.3 1016.7 L1489.7 1017.9 L1487.1 1019.0 L1484.4 1020.0 L1481.8 1020.8 L1479.2 1021.6 L1476.6 1022.2 L1474.0 1022.8 L1471.3 1023.3 L1468.7 1023.7 L1466.1 1024.1 L1463.5 1024.4 L1460.9 1024.6 L1458.2 1024.8 L1455.6 1024.9 L1453.0 1025.0 L1453.0 1025.0 L1450.4 1024.9 L1447.8 1024.8 L1445.1 1024.6 L1442.5 1024.4 L1439.9 1024.1 L1437.3 1023.7 L1434.7 1023.3 L1432.0 1022.8 L1429.4 1022.2 L1426.8 1021.6 L1424.2 1020.8 L1421.6 1020.0 L1418.9 1019.0 L1416.3 1017.9 L1413.7 1016.7 L1411.1 1015.2 L1408.5 1013.5 L1405.8 1011.3 L1403.2 1008.7 L1400.6 1005.4 L1398.0 1001.9 L1395.4 997.9 L1392.7 993.4 L1390.1 988.2 L1387.5 981.0 L1387.0 979.3 L1386.6 977.3 L1386.1 975.0 L1385.6 972.6 L1385.1 970.1 L1384.7 967.4 L1384.2 964.4 L1383.7 961.2 L1383.3 957.7 L1382.8 953.7 L1382.3 949.3 L1381.9 944.2 L1381.4 938.4 L1380.9 931.4 L1380.4 922.6 L1380.0 910.6 L1379.5 883.0Z" fill="#0a00e6"/>
<path d="M1391.2 883.0 L1391.7 865.1 L1392.1 856.0 L1392.6 848.9 L1393.1 843.0 L1393.6 837.9 L1394.0 833.4 L1394.5 829.3 L1395.0 825.6 L1395.4 822.2 L1395.9 819.1 L1396.4 816.2 L1396.8 813.6 L1397.3 811.0 L1397.8 808.7 L1398.3 806.5 L1398.7 804.4 L1399.2 802.4 L1401.4 794.5 L1403.5 788.0 L1405.7 783.3 L1407.8 779.7 L1410.0 777.0 L1412.1 774.8 L1414.3 772.8 L1416.4 771.0 L1418.6 769.4 L1420.7 768.0 L1422.9 766.7 L1425.0 765.5 L1427.2 764.5 L1429.3 763.5 L1431.5 762.6 L1433.6 761.8 L1435.8 761.1 L1437.9 760.5 L1440.1 759.9 L1442.2 759.4 L1444.4 759.0 L1446.5 758.6 L1448.7 758.3 L1450.8 758.2 L1453.0 758.0 L1453.0 758.0 L1455.2 758.2 L1457.3 758.3 L1459.5 758.6 L1461.6 759.0 L1463.8 759.4 L1465.9 759.9 L1468.1 760.5 L1470.2 761.1 L1472.4 761.8 L1474.5 762.6 L1476.7 763.5 L1478.8 764.5 L1481.0 765.5 L1483.1 766.7 L1485.3 768.0 L1487.4 769.4 L1489.6 771.0 L1491.7 772.8 L1493.9 774.8 L1496.0 777.0 L1498.2 779.7 L1500.3 783.3 L1502.5 788.0 L1504.6 794.5 L1506.8 802.4 L1507.3 804.4 L1507.7 806.5 L1508.2 808.7 L1508.7 811.0 L1509.2 813.6 L1509.6 816.2 L1510.1 819.1 L1510.6 822.2 L1511.0 825.6 L1511.5 829.3 L1512.0 833.4 L1512.4 837.9 L1512.9 843.0 L1513.4 848.9 L1513.9 856.0 L1514.3 865.1 L1514.8 883.0 L1514.8 883.0 L1514.3 900.9 L1513.9 910.0 L1513.4 917.1 L1512.9 923.0 L1512.4 928.1 L1512.0 932.6 L1511.5 936.7 L1511.0 940.4 L1510.6 943.8 L1510.1 946.9 L1509.6 949.8 L1509.2 952.4 L1508.7 955.0 L1508.2 957.3 L1507.7 959.5 L1507.3 961.6 L1506.8 963.6 L1504.6 971.5 L1502.5 978.0 L1500.3 982.7 L1498.2 986.3 L1496.0 989.0 L1493.9 991.2 L1491.7 993.2 L1489.6 995.0 L1487.4 996.6 L1485.3 998.0 L1483.1 999.3 L1481.0 1000.5 L1478.8 1001.5 L1476.7 1002.5 L1474.5 1003.4 L1472.4 1004.2 L1470.2 1004.9 L1468.1 1005.5 L1465.9 1006.1 L1463.8 1006.6 L1461.6 1007.0 L1459.5 1007.4 L1457.3 1007.7 L1455.2 1007.8 L1453.0 1008.0 L1453.0 1008.0 L1450.8 1007.8 L1448.7 1007.7 L1446.5 1007.4 L1444.4 1007.0 L1442.2 1006.6 L1440.1 1006.1 L1437.9 1005.5 L1435.8 1004.9 L1433.6 1004.2 L1431.5 1003.4 L1429.3 1002.5 L1427.2 1001.5 L1425.0 1000.5 L1422.9 999.3 L1420.7 998.0 L1418.6 996.6 L1416.4 995.0 L1414.3 993.2 L1412.1 991.2 L1410.0 989.0 L1407.8 986.3 L1405.7 982.7 L1403.5 978.0 L1401.4 971.5 L1399.2 963.6 L1398.7 961.6 L1398.3 959.5 L1397.8 957.3 L1397.3 955.0 L1396.8 952.4 L1396.4 949.8 L1395.9 946.9 L1395.4 943.8 L1395.0 940.4 L1394.5 936.7 L1394.0 932.6 L1393.6 928.1 L1393.1 923.0 L1392.6 917.1 L1392.1 910.0 L1391.7 900.9 L1391.2 883.0Z" fill="#2d00b9"/>
<path d="M1408.6 883.0 L1409.1 862.5 L1409.5 854.1 L1410.0 848.2 L1410.5 843.6 L1411.0 839.7 L1411.4 836.3 L1411.9 833.2 L1412.4 830.5 L1412.8 827.9 L1413.3 825.7 L1413.8 823.6 L1414.2 821.6 L1414.7 819.8 L1415.2 818.2 L1415.7 816.6 L1416.1 815.1 L1416.6 813.8 L1418.1 810.0 L1419.5 806.8 L1421.0 804.1 L1422.4 801.7 L1423.9 799.6 L1425.3 797.8 L1426.8 796.2 L1428.2 794.7 L1429.7 793.5 L1431.2 792.3 L1432.6 791.3 L1434.1 790.3 L1435.5 789.5 L1437.0 788.7 L1438.4 788.1 L1439.9 787.5 L1441.4 787.0 L1442.8 786.6 L1444.3 786.3 L1445.7 786.0 L1447.2 785.8 L1448.6 785.6 L1450.1 785.5 L1451.5 785.4 L1453.0 785.4 L1453.0 785.4 L1454.5 785.4 L1455.9 785.5 L1457.4 785.6 L1458.8 785.8 L1460.3 786.0 L1461.7 786.3 L1463.2 786.6 L1464.6 787.0 L1466.1 787.5 L1467.6 788.1 L1469.0 788.7 L1470.5 789.5 L1471.9 790.3 L1473.4 791.3 L1474.8 792.3 L1476.3 793.5 L1477.8 794.7 L1479.2 796.2 L1480.7 797.8 L1482.1 799.6 L1483.6 801.7 L1485.0 804.1 L1486.5 806.8 L1487.9 810.0 L1489.4 813.8 L1489.9 815.1 L1490.3 816.6 L1490.8 818.2 L1491.3 819.8 L1491.8 821.6 L1492.2 823.6 L1492.7 825.7 L1493.2 827.9 L1493.6 830.5 L1494.1 833.2 L1494.6 836.3 L1495.0 839.7 L1495.5 843.6 L1496.0 848.2 L1496.5 854.1 L1496.9 862.5 L1497.4 883.0 L1497.4 883.0 L1496.9 903.5 L1496.5 911.9 L1496.0 917.8 L1495.5 922.4 L1495.0 926.3 L1494.6 929.7 L1494.1 932.8 L1493.6 935.5 L1493.2 938.1 L1492.7 940.3 L1492.2 942.4 L1491.8 944.4 L1491.3 946.2 L1490.8 947.8 L1490.3 949.4 L1489.9 950.9 L1489.4 952.2 L1487.9 956.0 L1486.5 959.2 L1485.0 961.9 L1483.6 964.3 L1482.1 966.4 L1480.7 968.2 L1479.2 969.8 L1477.8 971.3 L1476.3 972.5 L1474.8 973.7 L1473.4 974.7 L1471.9 975.7 L1470.5 976.5 L1469.0 977.3 L1467.6 977.9 L1466.1 978.5 L1464.6 979.0 L1463.2 979.4 L1461.7 979.7 L1460.3 980.0 L1458.8 980.2 L1457.4 980.4 L1455.9 980.5 L1454.5 980.6 L1453.0 980.6 L1453.0 980.6 L1451.5 980.6 L1450.1 980.5 L1448.6 980.4 L1447.2 980.2 L1445.7 980.0 L1444.3 979.7 L1442.8 979.4 L1441.4 979.0 L1439.9 978.5 L1438.4 977.9 L1437.0 977.3 L1435.5 976.5 L1434.1 975.7 L1432.6 974.7 L1431.2 973.7 L1429.7 972.5 L1428.2 971.3 L1426.8 969.8 L1425.3 968.2 L1423.9 966.4 L1422.4 964.3 L1421.0 961.9 L1419.5 959.2 L1418.1 956.0 L1416.6 952.2 L1416.1 950.9 L1415.7 949.4 L1415.2 947.8 L1414.7 946.2 L1414.2 944.4 L1413.8 942.4 L1413.3 940.3 L1412.8 938.1 L1412.4 935.5 L1411.9 932.8 L1411.4 929.7 L1411.0 926.3 L1410.5 922.4 L1410.0 917.8 L1409.5 911.9 L1409.1 903.5 L1408.6 883.0Z" fill="#4b0082"/>
</g>
<!-- legend -->
<rect x="1840" y="720.00" width="37.6" height="23.63" fill="#c00000"/>
<rect x="1840" y="743.33" width="37.6" height="23.63" fill="#ee0000"/>
<rect x="1840" y="766.66" width="37.6" height="23.63" fill="#ff3300"/>
<rect x="1840" y="789.99" width="37.6" height="23.63" fill="#ff7800"/>
<rect x="1840" y="813.33" width="37.6" height="23.63" fill="#ffb400"/>
<rect x="1840" y="836.66" width="37.6" height="23.63" fill="#ffdc00"/>
<rect x="1840" y="859.99" width="37.6" height="23.63" fill="#f0f500"/>
<rect x="1840" y="883.32" width="37.6" height="23.63" fill="#80b000"/>
<rect x="1840" y="906.65" width="37.6" height="23.63" fill="#0f6e00"/>
<rect x="1840" y="929.98" width="37.6" height="23.63" fill="#00a060"/>
<rect x="1840" y="953.31" width="37.6" height="23.63" fill="#00e0d0"/>
<rect x="1840" y="976.64" width="37.6" height="23.63" fill="#00c0ff"/>
<rect x="1840" y="999.97" width="37.6" height="23.63" fill="#0050ff"/>
<rect x="1840" y="1023.31" width="37.6" height="23.63" fill="#0a00e6"/>
<rect x="1840" y="1046.64" width="37.6" height="23.63" fill="#2d00b9"/>
<rect x="1840" y="1069.97" width="37.6" height="23.63" fill="#4b0082"/>
<rect x="1840" y="720.0" width="37.6" height="373.30" fill="none" stroke="#222" stroke-width="0.9"/>
<text x="1829" y="724.50" text-anchor="end" font-family="Liberation Sans, sans-serif" font-size="11" fill="#000">1003</text>
<text x="1829" y="747.83" text-anchor="end" font-family="Liberation Sans, sans-serif" font-size="11" fill="#000">942</text>
<text x="1829" y="771.16" text-anchor="end" font-family="Liberation Sans, sans-serif" font-size="11" fill="#000">880</text>
<text x="1829" y="794.49" text-anchor="end" font-family="Liberation Sans, sans-serif" font-size="11" fill="#000">819</text>
<text x="1829" y="817.83" text-anchor="end" font-family="Liberation Sans, sans-serif" font-size="11" fill="#000">757</text>
<text x="1829" y="841.16" text-anchor="end" font-family="Liberation Sans, sans-serif" font-size="11" fill="#000">696</text>
<text x="1829" y="864.49" text-anchor="end" font-family="Liberation Sans, sans-serif" font-size="11" fill="#000">634</text>
<text x="1829" y="887.82" text-anchor="end" font-family="Liberation Sans, sans-serif" font-size="11" fill="#000">573</text>
<text x="1829" y="911.15" text-anchor="end" font-family="Liberation Sans, sans-serif" font-size="11" fill="#000">511</text>
<text x="1829" y="934.48" text-anchor="end" font-family="Liberation Sans, sans-serif" font-size="11" fill="#000">450</text>
<text x="1829" y="957.81" text-anchor="end" font-family="Liberation Sans, sans-serif" font-size="11" fill="#000">389</text>
<text x="1829" y="981.14" text-anchor="end" font-family="Liberation Sans, sans-serif" font-size="11" fill="#000">327</text>
<text x="1829" y="1004.47" text-anchor="end" font-family="Liberation Sans, sans-serif" font-size="11" fill="#000">266</text>
<text x="1829" y="1027.81" text-anchor="end" font-family="Liberation Sans, sans-serif" font-size="11" fill="#000">204</text>
<text x="1829" y="1051.14" text-anchor="end" font-family="Liberation Sans, sans-serif" font-size="11" fill="#000">143</text>
<text x="1829" y="1074.47" text-anchor="end" font-family="Liberation Sans, sans-serif" font-size="11" fill="#000">81</text>
<text x="1829" y="1097.80" text-anchor="end" font-family="Liberation Sans, sans-serif" font-size="11" fill="#000">20</text>
<!-- axes -->
<g fill="none"><path d="M1152.1 1081.5V1111" stroke="#7474ff" stroke-width="2.1"/><path d="M1152.1 1111H1181.5" stroke="#69b669" stroke-width="2.1"/><path d="M1148.5 1094.8L1152.1 1081.2L1155.7 1094.8" stroke="#1a1aff" stroke-width="1.3" stroke-linejoin="bevel"/><path d="M1152.1 1081.2V1087" stroke="#0000ff" stroke-width="2"/><path d="M1168.2 1107.9L1181.8 1111L1168.2 1114.2" stroke="#0b860b" stroke-width="1.3"/><path d="M1176 1111H1181.8" stroke="#008000" stroke-width="2"/></g>
<text x="1156.8" y="1082.9" font-family="Liberation Sans, sans-serif" font-size="12.2" fill="#0000ff">Z</text>
<text x="1181.6" y="1106.8" font-family="Liberation Sans, sans-serif" font-size="12.2" fill="#008000">Y</text>
</svg>
<div class="t" style="left:1852.3px;top:665.5px;font-size:15px;line-height:17px;color:#000">[°C]</div>
<!-- ===== status bar ===== -->
<div class="brushed" style="top:1124px;height:28px">
<svg width="1920" height="29" style="left:0;top:0"><defs><linearGradient id="hg2" x1="0" x2="1" y1="0" y2="0"><stop offset="0" stop-color="#020202"/><stop offset="0.3" stop-color="#0c0c0c"/><stop offset="0.55" stop-color="#222"/><stop offset="0.8" stop-color="#111"/><stop offset="1" stop-color="#030303"/></linearGradient><linearGradient id="hs2" x1="0" x2="1" y1="0" y2="0"><stop offset="0" stop-color="#1c1c1c"/><stop offset="0.3" stop-color="#2c2c2c"/><stop offset="0.55" stop-color="#4a4a4a"/><stop offset="1" stop-color="#1e1e1e"/></linearGradient></defs><rect width="1920" height="29" fill="url(#hg2)"/><rect width="1920" height="29" fill="url(#hs2)" filter="url(#brush)"/></svg>
</div>
<div class="t sb" style="left:23.3px;top:1132.6px;color:#8c8c8c">Design code :</div>
<div class="t sb" style="left:104.7px;top:1132.6px;color:#fff">EN</div>
<div class="t sb" style="left:164.7px;top:1132.6px;color:#8c8c8c">Analysis type :</div>
<div class="t sb" style="left:250.3px;top:1132.6px;color:#fff">Materially non-linear analysis</div>
</div>
</body>
</html>
